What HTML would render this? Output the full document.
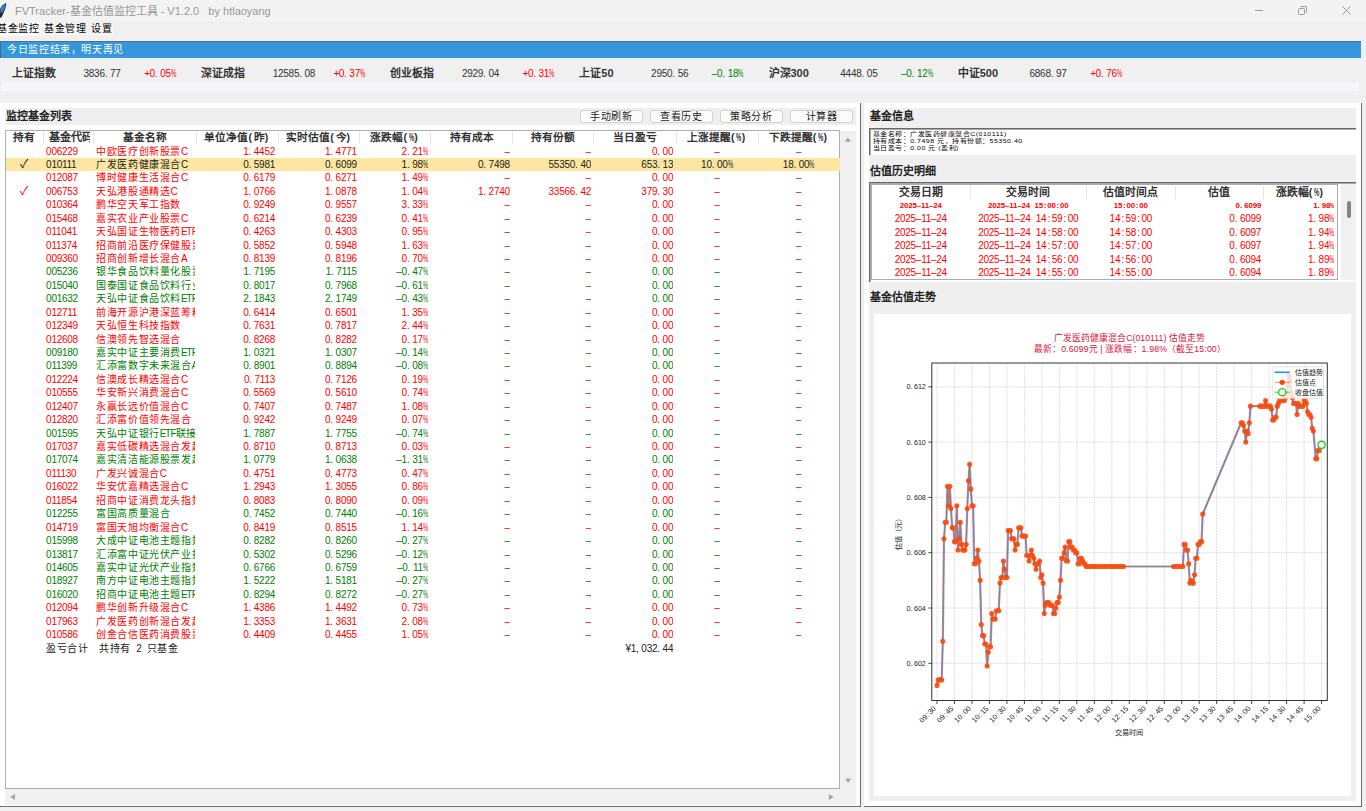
<!DOCTYPE html><html lang="zh-CN"><head><meta charset="utf-8"><style>
*{margin:0;padding:0;box-sizing:border-box}
html,body{width:1366px;height:811px;overflow:hidden;background:#f0f0f0;font-family:"Liberation Sans",sans-serif;position:relative}
.ab{position:absolute}
.tb{position:absolute;left:0;top:0;width:1366px;height:21px;background:#f3f3f3}
.title{position:absolute;left:15px;top:4px;font-size:11px;color:#989898;white-space:pre;line-height:15px}
.menu{position:absolute;top:22px;height:14px;font-size:10px;letter-spacing:0.7px;line-height:14px;color:#000;white-space:nowrap}
.blue{position:absolute;left:0;top:41px;width:1361px;height:17px;background:#3597db;border-top:1px solid #5a6f7e}
.idx{position:absolute;top:67px;line-height:13px;height:13px;white-space:nowrap}
.il{font-size:10.9px;font-weight:bold;color:#333}
.iv{color:#333}
.rd{color:#ff0000}.gr{color:#008000}
.panel{position:absolute;background:#fff;border-right:1px solid #6e6e6e;border-bottom:1px solid #6e6e6e}
.band{position:absolute;background:#efefef}
.st{position:absolute;font-size:11px;font-weight:bold;color:#222;white-space:nowrap;line-height:13px}
.btn{position:absolute;top:109.5px;height:13.5px;width:63px;background:#fbfbfb;border:1px solid #d3d3d3;border-radius:3px;font-size:10px;letter-spacing:0.5px;line-height:11.5px;text-align:center;color:#222}
.c{position:absolute;height:13.43px;line-height:13.43px;white-space:pre;overflow:hidden;font-size:10px;letter-spacing:0.6px}
.hd{position:absolute;top:131px;height:13.6px;line-height:13.6px;font-size:10.7px;font-weight:bold;color:#333;text-align:center;white-space:nowrap;overflow:hidden}
.sep{position:absolute;width:1px;background:#e6e6e6}
.sel{background:#fce6a1}
.row{position:absolute;left:6px;width:833px;height:13.43px}
.ht .c{height:13.45px;line-height:13.45px}
.dk{color:#222}
.ib{font-family:"Liberation Sans",sans-serif;font-size:11px;letter-spacing:0;font-weight:bold}
.a{font-family:"Liberation Sans",sans-serif;font-size:10px;letter-spacing:-0.26px;}
.a .kd{letter-spacing:2.52px}
.a .ko{letter-spacing:1.26px;padding-left:1.26px}
.a .km{letter-spacing:0.98px;padding-left:0.98px}
.a .kc{letter-spacing:2.52px}
.a .kl{letter-spacing:1.97px}
.a .kr{letter-spacing:1.97px}
.a .ks{letter-spacing:2.52px}
.a .kp{letter-spacing:-0.54px}
.a .kC{letter-spacing:-1.92px}
.a .kA{letter-spacing:-1.37px}
.a .kE{letter-spacing:-1.37px}
.a .kT{letter-spacing:-0.81px}
.a .kF{letter-spacing:-0.81px}
.a .pc{display:inline-block;width:5.30px;transform:scaleX(0.596);transform-origin:0 0}
.s{font-family:"Liberation Sans",sans-serif;font-size:7.9px;letter-spacing:-0.13px;font-weight:bold}
.s .kd{letter-spacing:2.06px}
.s .ko{letter-spacing:0.81px;padding-left:0.81px}
.s .km{letter-spacing:0.81px;padding-left:0.81px}
.s .kc{letter-spacing:2.06px}
.s .kl{letter-spacing:1.63px}
.s .kr{letter-spacing:1.63px}
.s .ks{letter-spacing:2.06px}
.s .kp{letter-spacing:-0.35px}
.s .kC{letter-spacing:-1.44px}
.s .kA{letter-spacing:-1.44px}
.s .kE{letter-spacing:-1.01px}
.s .kT{letter-spacing:-0.57px}
.s .kF{letter-spacing:-0.57px}
.s .pc{display:inline-block;width:4.26px;transform:scaleX(0.607);transform-origin:0 0}
.h{font-family:"Liberation Sans",sans-serif;font-size:10.5px;letter-spacing:-0.49px;font-weight:bold}
.h .kd{letter-spacing:2.43px}
.h .ko{letter-spacing:0.93px;padding-left:0.93px}
.h .km{letter-spacing:0.93px;padding-left:0.93px}
.h .kc{letter-spacing:2.43px}
.h .kl{letter-spacing:1.85px}
.h .kr{letter-spacing:1.85px}
.h .ks{letter-spacing:2.43px}
.h .kp{letter-spacing:-0.78px}
.h .kC{letter-spacing:-2.23px}
.h .kA{letter-spacing:-2.23px}
.h .kE{letter-spacing:-1.65px}
.h .kT{letter-spacing:-1.07px}
.h .kF{letter-spacing:-1.07px}
.h .pc{display:inline-block;width:5.35px;transform:scaleX(0.573);transform-origin:0 0}
i{font-style:normal}.s{position:relative;top:-1px}</style></head><body>

<div class="tb"></div>
<svg class="ab" style="left:0;top:0" width="10" height="20" viewBox="0 0 10 20"><path d="M5.9 2.8L6.3 5L5 9.5L2.6 15L1.1 17.9L0 17.2L0 8.8L2.6 5.2Z" fill="#262626"/><path d="M5.4 3.6L5.6 5.4L4.2 9.4L2.4 12.6L0.6 12.8L0.6 9.2L2.9 5.9Z" fill="#3d8fe2"/><path d="M4.8 4.4L3.6 8L1.6 11.5" stroke="#1d5fae" stroke-width="0.7" fill="none"/></svg>
<div class="title">FVTracker-基金估值监控工具 - V1.2.0   by htlaoyang</div>
<div class="ab" style="left:1255px;top:10px;width:8px;height:1px;background:#9a9a9a"></div>
<div class="ab" style="left:1298px;top:7.5px;width:7px;height:7px;border:1px solid #9a9a9a;border-radius:1.5px"></div>
<div class="ab" style="left:1300px;top:6px;width:7px;height:7px;border-top:1px solid #9a9a9a;border-right:1px solid #9a9a9a;border-radius:1.5px"></div>
<svg class="ab" style="left:1341px;top:5px" width="11" height="11"><path d="M1.5 1.5L9.5 9.5M9.5 1.5L1.5 9.5" stroke="#9a9a9a" stroke-width="1"/></svg>
<div class="ab" style="left:0;top:22px;width:42px;height:14px;background:#fafafa"></div>
<div class="ab" style="left:43px;top:22.5px;width:44.5px;height:12.5px;background:#f5f5f5"></div>
<div class="ab" style="left:89px;top:22.5px;width:24.5px;height:12.5px;background:#f5f5f5"></div>
<div class="menu" style="left:-3px">基金监控</div>
<div class="menu" style="left:44px">基金管理</div>
<div class="menu" style="left:91px">设置</div>
<div class="blue"></div><div class="ab" style="left:0;top:42px;width:1px;height:16px;background:#4a6a84"></div>
<div class="ab" style="left:7px;top:43px;font-size:10px;letter-spacing:0.64px;line-height:14px;color:#fff;white-space:nowrap">今日监控结束，明天再见</div>
<div class="idx il" style="left:11.7px">上证指数</div>
<div class="idx iv" style="left:83.5px;top:65px"><span class=a>3836<i class=kd>.</i>77</span></div>
<div class="idx rd" style="left:144.2px;top:65px"><span class=a><i class=kp>+</i>0<i class=kd>.</i>05<i class=pc>%</i></span></div>
<div class="idx il" style="left:200.9px">深证成指</div>
<div class="idx iv" style="left:272.7px;top:65px"><span class=a>12585<i class=kd>.</i>08</span></div>
<div class="idx rd" style="left:333.4px;top:65px"><span class=a><i class=kp>+</i>0<i class=kd>.</i>37<i class=pc>%</i></span></div>
<div class="idx il" style="left:390.1px">创业板指</div>
<div class="idx iv" style="left:461.9px;top:65px"><span class=a>2929<i class=kd>.</i>04</span></div>
<div class="idx rd" style="left:522.6px;top:65px"><span class=a><i class=kp>+</i>0<i class=kd>.</i>31<i class=pc>%</i></span></div>
<div class="idx il" style="left:579.3px">上证<span class=ib>50</span></div>
<div class="idx iv" style="left:651.1px;top:65px"><span class=a>2950<i class=kd>.</i>56</span></div>
<div class="idx gr" style="left:711.8px;top:65px"><span class=a>–0<i class=kd>.</i>18<i class=pc>%</i></span></div>
<div class="idx il" style="left:768.5px">沪深<span class=ib>300</span></div>
<div class="idx iv" style="left:840.3px;top:65px"><span class=a>4448<i class=kd>.</i>05</span></div>
<div class="idx gr" style="left:901.0px;top:65px"><span class=a>–0<i class=kd>.</i>12<i class=pc>%</i></span></div>
<div class="idx il" style="left:957.7px">中证<span class=ib>500</span></div>
<div class="idx iv" style="left:1029.5px;top:65px"><span class=a>6868<i class=kd>.</i>97</span></div>
<div class="idx rd" style="left:1090.2px;top:65px"><span class=a><i class=kp>+</i>0<i class=kd>.</i>76<i class=pc>%</i></span></div>
<div class="ab" style="left:2px;top:82px;width:1357px;height:9px;background:#f7f7f9"></div>
<div class="panel" style="left:0;top:103px;width:861px;height:704px"></div>
<div class="band" style="left:5px;top:107.5px;width:851px;height:17.5px"></div>
<div class="st" style="left:6px;top:110px">监控基金列表</div>
<div class="btn" style="left:579.6px">手动刷新</div>
<div class="btn" style="left:649.6px">查看历史</div>
<div class="btn" style="left:719.7px">策略分析</div>
<div class="btn" style="left:789.8px">计算器</div>
<div class="ab" style="left:5px;top:130px;width:835px;height:659px;background:#fff;border:1px solid #a9adb5"></div>
<div class="ab" style="left:840px;top:130.5px;width:16px;height:674px;background:#f0f0f0"></div>
<div class="ab" style="left:5px;top:789px;width:835px;height:15.5px;background:#f0f0f0"></div>
<svg class="ab" style="left:0;top:0" width="1366" height="811"><path d="M844.8 141.7L851 141.7L847.9 137.3Z" fill="#a3a3a3"/><path d="M845.2 778.5L851 778.5L848.1 783Z" fill="#a3a3a3"/><path d="M829 794L829 800L833.5 797Z" fill="#a3a3a3"/><path d="M15 794L15 800L10.2 797Z" fill="#a3a3a3"/></svg>
<div class="hd" style="left:5.5px;width:37.5px">持有</div>
<div class="hd" style="left:43px;width:46.5px;text-align:left;padding-left:5.5px;font-size:11.2px">基金代码</div>
<div class="sep" style="left:42.5px;top:131px;height:13px"></div>
<div class="hd" style="left:93.5px;width:102.5px">基金名称</div>
<div class="sep" style="left:93.0px;top:131px;height:13px"></div>
<div class="hd" style="left:196.0px;width:82.5px">单位净值<span class=h><i class=kl>(</i></span>昨<span class=h><i class=kr>)</i></span></div>
<div class="sep" style="left:195.5px;top:131px;height:13px"></div>
<div class="hd" style="left:278.5px;width:81.0px">实时估值<span class=h><i class=kl>(</i></span>今<span class=h><i class=kr>)</i></span></div>
<div class="sep" style="left:278.0px;top:131px;height:13px"></div>
<div class="hd" style="left:359.5px;width:71.0px">涨跌幅<span class=h><i class=kl>(</i><i class=pc>%</i><i class=kr>)</i></span></div>
<div class="sep" style="left:359.0px;top:131px;height:13px"></div>
<div class="hd" style="left:430.5px;width:82.0px">持有成本</div>
<div class="sep" style="left:430.0px;top:131px;height:13px"></div>
<div class="hd" style="left:512.5px;width:81.0px">持有份额</div>
<div class="sep" style="left:512.0px;top:131px;height:13px"></div>
<div class="hd" style="left:593.5px;width:82.5px">当日盈亏</div>
<div class="sep" style="left:593.0px;top:131px;height:13px"></div>
<div class="hd" style="left:676.0px;width:82.0px">上涨提醒<span class=h><i class=kl>(</i><i class=pc>%</i><i class=kr>)</i></span></div>
<div class="sep" style="left:675.5px;top:131px;height:13px"></div>
<div class="hd" style="left:758.0px;width:81.5px">下跌提醒<span class=h><i class=kl>(</i><i class=pc>%</i><i class=kr>)</i></span></div>
<div class="sep" style="left:757.5px;top:131px;height:13px"></div>
<div class="c rd" style="top:144.60px;left:5.50px;width:37.50px;text-align:center"></div>
<div class="c rd" style="top:144.60px;left:43.00px;width:50.50px;padding-left:3.1px"><span class=a>006229</span></div>
<div class="c rd" style="top:144.60px;left:93.50px;width:101.50px;padding-left:2.7px">中欧医疗创新股票<span class=a><i class=kC>C</i></span></div>
<div class="c rd" style="top:144.60px;left:196.00px;width:79.00px;text-align:right;padding-right:0.0px"><span class=a>1<i class=kd>.</i>4452</span></div>
<div class="c rd" style="top:144.60px;left:278.50px;width:78.30px;text-align:right;padding-right:0.0px"><span class=a>1<i class=kd>.</i>4771</span></div>
<div class="c rd" style="top:144.60px;left:359.50px;width:68.60px;text-align:right;padding-right:0.0px"><span class=a>2<i class=kd>.</i>21<i class=pc>%</i></span></div>
<div class="c rd" style="top:144.60px;left:430.50px;width:79.30px;text-align:right;padding-right:0.0px"><span class=a>–</span></div>
<div class="c rd" style="top:144.60px;left:512.50px;width:78.50px;text-align:right;padding-right:0.0px"><span class=a>–</span></div>
<div class="c rd" style="top:144.60px;left:593.50px;width:79.70px;text-align:right;padding-right:0.0px"><span class=a>0<i class=kd>.</i>00</span></div>
<div class="c rd" style="top:144.60px;left:676.00px;width:82.00px;text-align:center"><span class=a>–</span></div>
<div class="c rd" style="top:144.60px;left:758.00px;width:81.50px;text-align:center"><span class=a>–</span></div>
<div class="ab sel" style="left:6px;top:158.03px;width:833.5px;height:13.43px"></div>
<div class="c dk" style="top:158.03px;left:5.50px;width:37.50px;text-align:center"><span style="color:#222;font-size:12px">✓</span></div>
<div class="c dk" style="top:158.03px;left:43.00px;width:50.50px;padding-left:3.1px"><span class=a>010111</span></div>
<div class="c dk" style="top:158.03px;left:93.50px;width:101.50px;padding-left:2.7px">广发医药健康混合<span class=a><i class=kC>C</i></span></div>
<div class="c dk" style="top:158.03px;left:196.00px;width:79.00px;text-align:right;padding-right:0.0px"><span class=a>0<i class=kd>.</i>5981</span></div>
<div class="c dk" style="top:158.03px;left:278.50px;width:78.30px;text-align:right;padding-right:0.0px"><span class=a>0<i class=kd>.</i>6099</span></div>
<div class="c dk" style="top:158.03px;left:359.50px;width:68.60px;text-align:right;padding-right:0.0px"><span class=a>1<i class=kd>.</i>98<i class=pc>%</i></span></div>
<div class="c dk" style="top:158.03px;left:430.50px;width:79.30px;text-align:right;padding-right:0.0px"><span class=a>0<i class=kd>.</i>7498</span></div>
<div class="c dk" style="top:158.03px;left:512.50px;width:78.50px;text-align:right;padding-right:0.0px"><span class=a>55350<i class=kd>.</i>40</span></div>
<div class="c dk" style="top:158.03px;left:593.50px;width:79.70px;text-align:right;padding-right:0.0px"><span class=a>653<i class=kd>.</i>13</span></div>
<div class="c dk" style="top:158.03px;left:676.00px;width:82.00px;text-align:center"><span class=a>10<i class=kd>.</i>00<i class=pc>%</i></span></div>
<div class="c dk" style="top:158.03px;left:758.00px;width:81.50px;text-align:center"><span class=a>18<i class=kd>.</i>00<i class=pc>%</i></span></div>
<div class="c rd" style="top:171.46px;left:5.50px;width:37.50px;text-align:center"></div>
<div class="c rd" style="top:171.46px;left:43.00px;width:50.50px;padding-left:3.1px"><span class=a>012087</span></div>
<div class="c rd" style="top:171.46px;left:93.50px;width:101.50px;padding-left:2.7px">博时健康生活混合<span class=a><i class=kC>C</i></span></div>
<div class="c rd" style="top:171.46px;left:196.00px;width:79.00px;text-align:right;padding-right:0.0px"><span class=a>0<i class=kd>.</i>6179</span></div>
<div class="c rd" style="top:171.46px;left:278.50px;width:78.30px;text-align:right;padding-right:0.0px"><span class=a>0<i class=kd>.</i>6271</span></div>
<div class="c rd" style="top:171.46px;left:359.50px;width:68.60px;text-align:right;padding-right:0.0px"><span class=a>1<i class=kd>.</i>49<i class=pc>%</i></span></div>
<div class="c rd" style="top:171.46px;left:430.50px;width:79.30px;text-align:right;padding-right:0.0px"><span class=a>–</span></div>
<div class="c rd" style="top:171.46px;left:512.50px;width:78.50px;text-align:right;padding-right:0.0px"><span class=a>–</span></div>
<div class="c rd" style="top:171.46px;left:593.50px;width:79.70px;text-align:right;padding-right:0.0px"><span class=a>0<i class=kd>.</i>00</span></div>
<div class="c rd" style="top:171.46px;left:676.00px;width:82.00px;text-align:center"><span class=a>–</span></div>
<div class="c rd" style="top:171.46px;left:758.00px;width:81.50px;text-align:center"><span class=a>–</span></div>
<div class="c rd" style="top:184.89px;left:5.50px;width:37.50px;text-align:center"><span style="font-size:12px">✓</span></div>
<div class="c rd" style="top:184.89px;left:43.00px;width:50.50px;padding-left:3.1px"><span class=a>006753</span></div>
<div class="c rd" style="top:184.89px;left:93.50px;width:101.50px;padding-left:2.7px">天弘港股通精选<span class=a><i class=kC>C</i></span></div>
<div class="c rd" style="top:184.89px;left:196.00px;width:79.00px;text-align:right;padding-right:0.0px"><span class=a>1<i class=kd>.</i>0766</span></div>
<div class="c rd" style="top:184.89px;left:278.50px;width:78.30px;text-align:right;padding-right:0.0px"><span class=a>1<i class=kd>.</i>0878</span></div>
<div class="c rd" style="top:184.89px;left:359.50px;width:68.60px;text-align:right;padding-right:0.0px"><span class=a>1<i class=kd>.</i>04<i class=pc>%</i></span></div>
<div class="c rd" style="top:184.89px;left:430.50px;width:79.30px;text-align:right;padding-right:0.0px"><span class=a>1<i class=kd>.</i>2740</span></div>
<div class="c rd" style="top:184.89px;left:512.50px;width:78.50px;text-align:right;padding-right:0.0px"><span class=a>33566<i class=kd>.</i>42</span></div>
<div class="c rd" style="top:184.89px;left:593.50px;width:79.70px;text-align:right;padding-right:0.0px"><span class=a>379<i class=kd>.</i>30</span></div>
<div class="c rd" style="top:184.89px;left:676.00px;width:82.00px;text-align:center"><span class=a>–</span></div>
<div class="c rd" style="top:184.89px;left:758.00px;width:81.50px;text-align:center"><span class=a>–</span></div>
<div class="c rd" style="top:198.32px;left:5.50px;width:37.50px;text-align:center"></div>
<div class="c rd" style="top:198.32px;left:43.00px;width:50.50px;padding-left:3.1px"><span class=a>010364</span></div>
<div class="c rd" style="top:198.32px;left:93.50px;width:101.50px;padding-left:2.7px">鹏华空天军工指数</div>
<div class="c rd" style="top:198.32px;left:196.00px;width:79.00px;text-align:right;padding-right:0.0px"><span class=a>0<i class=kd>.</i>9249</span></div>
<div class="c rd" style="top:198.32px;left:278.50px;width:78.30px;text-align:right;padding-right:0.0px"><span class=a>0<i class=kd>.</i>9557</span></div>
<div class="c rd" style="top:198.32px;left:359.50px;width:68.60px;text-align:right;padding-right:0.0px"><span class=a>3<i class=kd>.</i>33<i class=pc>%</i></span></div>
<div class="c rd" style="top:198.32px;left:430.50px;width:79.30px;text-align:right;padding-right:0.0px"><span class=a>–</span></div>
<div class="c rd" style="top:198.32px;left:512.50px;width:78.50px;text-align:right;padding-right:0.0px"><span class=a>–</span></div>
<div class="c rd" style="top:198.32px;left:593.50px;width:79.70px;text-align:right;padding-right:0.0px"><span class=a>0<i class=kd>.</i>00</span></div>
<div class="c rd" style="top:198.32px;left:676.00px;width:82.00px;text-align:center"><span class=a>–</span></div>
<div class="c rd" style="top:198.32px;left:758.00px;width:81.50px;text-align:center"><span class=a>–</span></div>
<div class="c rd" style="top:211.75px;left:5.50px;width:37.50px;text-align:center"></div>
<div class="c rd" style="top:211.75px;left:43.00px;width:50.50px;padding-left:3.1px"><span class=a>015468</span></div>
<div class="c rd" style="top:211.75px;left:93.50px;width:101.50px;padding-left:2.7px">嘉实农业产业股票<span class=a><i class=kC>C</i></span></div>
<div class="c rd" style="top:211.75px;left:196.00px;width:79.00px;text-align:right;padding-right:0.0px"><span class=a>0<i class=kd>.</i>6214</span></div>
<div class="c rd" style="top:211.75px;left:278.50px;width:78.30px;text-align:right;padding-right:0.0px"><span class=a>0<i class=kd>.</i>6239</span></div>
<div class="c rd" style="top:211.75px;left:359.50px;width:68.60px;text-align:right;padding-right:0.0px"><span class=a>0<i class=kd>.</i>41<i class=pc>%</i></span></div>
<div class="c rd" style="top:211.75px;left:430.50px;width:79.30px;text-align:right;padding-right:0.0px"><span class=a>–</span></div>
<div class="c rd" style="top:211.75px;left:512.50px;width:78.50px;text-align:right;padding-right:0.0px"><span class=a>–</span></div>
<div class="c rd" style="top:211.75px;left:593.50px;width:79.70px;text-align:right;padding-right:0.0px"><span class=a>0<i class=kd>.</i>00</span></div>
<div class="c rd" style="top:211.75px;left:676.00px;width:82.00px;text-align:center"><span class=a>–</span></div>
<div class="c rd" style="top:211.75px;left:758.00px;width:81.50px;text-align:center"><span class=a>–</span></div>
<div class="c rd" style="top:225.18px;left:5.50px;width:37.50px;text-align:center"></div>
<div class="c rd" style="top:225.18px;left:43.00px;width:50.50px;padding-left:3.1px"><span class=a>011041</span></div>
<div class="c rd" style="top:225.18px;left:93.50px;width:101.50px;padding-left:2.7px">天弘国证生物医药<span class=a><i class=kE>E</i><i class=kT>T</i><i class=kF>F</i></span>联接<span class=a><i class=kC>C</i></span></div>
<div class="c rd" style="top:225.18px;left:196.00px;width:79.00px;text-align:right;padding-right:0.0px"><span class=a>0<i class=kd>.</i>4263</span></div>
<div class="c rd" style="top:225.18px;left:278.50px;width:78.30px;text-align:right;padding-right:0.0px"><span class=a>0<i class=kd>.</i>4303</span></div>
<div class="c rd" style="top:225.18px;left:359.50px;width:68.60px;text-align:right;padding-right:0.0px"><span class=a>0<i class=kd>.</i>95<i class=pc>%</i></span></div>
<div class="c rd" style="top:225.18px;left:430.50px;width:79.30px;text-align:right;padding-right:0.0px"><span class=a>–</span></div>
<div class="c rd" style="top:225.18px;left:512.50px;width:78.50px;text-align:right;padding-right:0.0px"><span class=a>–</span></div>
<div class="c rd" style="top:225.18px;left:593.50px;width:79.70px;text-align:right;padding-right:0.0px"><span class=a>0<i class=kd>.</i>00</span></div>
<div class="c rd" style="top:225.18px;left:676.00px;width:82.00px;text-align:center"><span class=a>–</span></div>
<div class="c rd" style="top:225.18px;left:758.00px;width:81.50px;text-align:center"><span class=a>–</span></div>
<div class="c rd" style="top:238.61px;left:5.50px;width:37.50px;text-align:center"></div>
<div class="c rd" style="top:238.61px;left:43.00px;width:50.50px;padding-left:3.1px"><span class=a>011374</span></div>
<div class="c rd" style="top:238.61px;left:93.50px;width:101.50px;padding-left:2.7px">招商前沿医疗保健股票<span class=a><i class=kC>C</i></span></div>
<div class="c rd" style="top:238.61px;left:196.00px;width:79.00px;text-align:right;padding-right:0.0px"><span class=a>0<i class=kd>.</i>5852</span></div>
<div class="c rd" style="top:238.61px;left:278.50px;width:78.30px;text-align:right;padding-right:0.0px"><span class=a>0<i class=kd>.</i>5948</span></div>
<div class="c rd" style="top:238.61px;left:359.50px;width:68.60px;text-align:right;padding-right:0.0px"><span class=a>1<i class=kd>.</i>63<i class=pc>%</i></span></div>
<div class="c rd" style="top:238.61px;left:430.50px;width:79.30px;text-align:right;padding-right:0.0px"><span class=a>–</span></div>
<div class="c rd" style="top:238.61px;left:512.50px;width:78.50px;text-align:right;padding-right:0.0px"><span class=a>–</span></div>
<div class="c rd" style="top:238.61px;left:593.50px;width:79.70px;text-align:right;padding-right:0.0px"><span class=a>0<i class=kd>.</i>00</span></div>
<div class="c rd" style="top:238.61px;left:676.00px;width:82.00px;text-align:center"><span class=a>–</span></div>
<div class="c rd" style="top:238.61px;left:758.00px;width:81.50px;text-align:center"><span class=a>–</span></div>
<div class="c rd" style="top:252.04px;left:5.50px;width:37.50px;text-align:center"></div>
<div class="c rd" style="top:252.04px;left:43.00px;width:50.50px;padding-left:3.1px"><span class=a>009360</span></div>
<div class="c rd" style="top:252.04px;left:93.50px;width:101.50px;padding-left:2.7px">招商创新增长混合<span class=a><i class=kA>A</i></span></div>
<div class="c rd" style="top:252.04px;left:196.00px;width:79.00px;text-align:right;padding-right:0.0px"><span class=a>0<i class=kd>.</i>8139</span></div>
<div class="c rd" style="top:252.04px;left:278.50px;width:78.30px;text-align:right;padding-right:0.0px"><span class=a>0<i class=kd>.</i>8196</span></div>
<div class="c rd" style="top:252.04px;left:359.50px;width:68.60px;text-align:right;padding-right:0.0px"><span class=a>0<i class=kd>.</i>70<i class=pc>%</i></span></div>
<div class="c rd" style="top:252.04px;left:430.50px;width:79.30px;text-align:right;padding-right:0.0px"><span class=a>–</span></div>
<div class="c rd" style="top:252.04px;left:512.50px;width:78.50px;text-align:right;padding-right:0.0px"><span class=a>–</span></div>
<div class="c rd" style="top:252.04px;left:593.50px;width:79.70px;text-align:right;padding-right:0.0px"><span class=a>0<i class=kd>.</i>00</span></div>
<div class="c rd" style="top:252.04px;left:676.00px;width:82.00px;text-align:center"><span class=a>–</span></div>
<div class="c rd" style="top:252.04px;left:758.00px;width:81.50px;text-align:center"><span class=a>–</span></div>
<div class="c gr" style="top:265.47px;left:5.50px;width:37.50px;text-align:center"></div>
<div class="c gr" style="top:265.47px;left:43.00px;width:50.50px;padding-left:3.1px"><span class=a>005236</span></div>
<div class="c gr" style="top:265.47px;left:93.50px;width:101.50px;padding-left:2.7px">银华食品饮料量化股票<span class=a><i class=kC>C</i></span></div>
<div class="c gr" style="top:265.47px;left:196.00px;width:79.00px;text-align:right;padding-right:0.0px"><span class=a>1<i class=kd>.</i>7195</span></div>
<div class="c gr" style="top:265.47px;left:278.50px;width:78.30px;text-align:right;padding-right:0.0px"><span class=a>1<i class=kd>.</i>7115</span></div>
<div class="c gr" style="top:265.47px;left:359.50px;width:68.60px;text-align:right;padding-right:0.0px"><span class=a>–0<i class=kd>.</i>47<i class=pc>%</i></span></div>
<div class="c gr" style="top:265.47px;left:430.50px;width:79.30px;text-align:right;padding-right:0.0px"><span class=a>–</span></div>
<div class="c gr" style="top:265.47px;left:512.50px;width:78.50px;text-align:right;padding-right:0.0px"><span class=a>–</span></div>
<div class="c gr" style="top:265.47px;left:593.50px;width:79.70px;text-align:right;padding-right:0.0px"><span class=a>0<i class=kd>.</i>00</span></div>
<div class="c gr" style="top:265.47px;left:676.00px;width:82.00px;text-align:center"><span class=a>–</span></div>
<div class="c gr" style="top:265.47px;left:758.00px;width:81.50px;text-align:center"><span class=a>–</span></div>
<div class="c gr" style="top:278.90px;left:5.50px;width:37.50px;text-align:center"></div>
<div class="c gr" style="top:278.90px;left:43.00px;width:50.50px;padding-left:3.1px"><span class=a>015040</span></div>
<div class="c gr" style="top:278.90px;left:93.50px;width:101.50px;padding-left:2.7px">国泰国证食品饮料行业指数</div>
<div class="c gr" style="top:278.90px;left:196.00px;width:79.00px;text-align:right;padding-right:0.0px"><span class=a>0<i class=kd>.</i>8017</span></div>
<div class="c gr" style="top:278.90px;left:278.50px;width:78.30px;text-align:right;padding-right:0.0px"><span class=a>0<i class=kd>.</i>7968</span></div>
<div class="c gr" style="top:278.90px;left:359.50px;width:68.60px;text-align:right;padding-right:0.0px"><span class=a>–0<i class=kd>.</i>61<i class=pc>%</i></span></div>
<div class="c gr" style="top:278.90px;left:430.50px;width:79.30px;text-align:right;padding-right:0.0px"><span class=a>–</span></div>
<div class="c gr" style="top:278.90px;left:512.50px;width:78.50px;text-align:right;padding-right:0.0px"><span class=a>–</span></div>
<div class="c gr" style="top:278.90px;left:593.50px;width:79.70px;text-align:right;padding-right:0.0px"><span class=a>0<i class=kd>.</i>00</span></div>
<div class="c gr" style="top:278.90px;left:676.00px;width:82.00px;text-align:center"><span class=a>–</span></div>
<div class="c gr" style="top:278.90px;left:758.00px;width:81.50px;text-align:center"><span class=a>–</span></div>
<div class="c gr" style="top:292.33px;left:5.50px;width:37.50px;text-align:center"></div>
<div class="c gr" style="top:292.33px;left:43.00px;width:50.50px;padding-left:3.1px"><span class=a>001632</span></div>
<div class="c gr" style="top:292.33px;left:93.50px;width:101.50px;padding-left:2.7px">天弘中证食品饮料<span class=a><i class=kE>E</i><i class=kT>T</i><i class=kF>F</i></span>联接<span class=a><i class=kC>C</i></span></div>
<div class="c gr" style="top:292.33px;left:196.00px;width:79.00px;text-align:right;padding-right:0.0px"><span class=a>2<i class=kd>.</i>1843</span></div>
<div class="c gr" style="top:292.33px;left:278.50px;width:78.30px;text-align:right;padding-right:0.0px"><span class=a>2<i class=kd>.</i>1749</span></div>
<div class="c gr" style="top:292.33px;left:359.50px;width:68.60px;text-align:right;padding-right:0.0px"><span class=a>–0<i class=kd>.</i>43<i class=pc>%</i></span></div>
<div class="c gr" style="top:292.33px;left:430.50px;width:79.30px;text-align:right;padding-right:0.0px"><span class=a>–</span></div>
<div class="c gr" style="top:292.33px;left:512.50px;width:78.50px;text-align:right;padding-right:0.0px"><span class=a>–</span></div>
<div class="c gr" style="top:292.33px;left:593.50px;width:79.70px;text-align:right;padding-right:0.0px"><span class=a>0<i class=kd>.</i>00</span></div>
<div class="c gr" style="top:292.33px;left:676.00px;width:82.00px;text-align:center"><span class=a>–</span></div>
<div class="c gr" style="top:292.33px;left:758.00px;width:81.50px;text-align:center"><span class=a>–</span></div>
<div class="c rd" style="top:305.76px;left:5.50px;width:37.50px;text-align:center"></div>
<div class="c rd" style="top:305.76px;left:43.00px;width:50.50px;padding-left:3.1px"><span class=a>012711</span></div>
<div class="c rd" style="top:305.76px;left:93.50px;width:101.50px;padding-left:2.7px">前海开源沪港深蓝筹精选</div>
<div class="c rd" style="top:305.76px;left:196.00px;width:79.00px;text-align:right;padding-right:0.0px"><span class=a>0<i class=kd>.</i>6414</span></div>
<div class="c rd" style="top:305.76px;left:278.50px;width:78.30px;text-align:right;padding-right:0.0px"><span class=a>0<i class=kd>.</i>6501</span></div>
<div class="c rd" style="top:305.76px;left:359.50px;width:68.60px;text-align:right;padding-right:0.0px"><span class=a>1<i class=kd>.</i>35<i class=pc>%</i></span></div>
<div class="c rd" style="top:305.76px;left:430.50px;width:79.30px;text-align:right;padding-right:0.0px"><span class=a>–</span></div>
<div class="c rd" style="top:305.76px;left:512.50px;width:78.50px;text-align:right;padding-right:0.0px"><span class=a>–</span></div>
<div class="c rd" style="top:305.76px;left:593.50px;width:79.70px;text-align:right;padding-right:0.0px"><span class=a>0<i class=kd>.</i>00</span></div>
<div class="c rd" style="top:305.76px;left:676.00px;width:82.00px;text-align:center"><span class=a>–</span></div>
<div class="c rd" style="top:305.76px;left:758.00px;width:81.50px;text-align:center"><span class=a>–</span></div>
<div class="c rd" style="top:319.19px;left:5.50px;width:37.50px;text-align:center"></div>
<div class="c rd" style="top:319.19px;left:43.00px;width:50.50px;padding-left:3.1px"><span class=a>012349</span></div>
<div class="c rd" style="top:319.19px;left:93.50px;width:101.50px;padding-left:2.7px">天弘恒生科技指数</div>
<div class="c rd" style="top:319.19px;left:196.00px;width:79.00px;text-align:right;padding-right:0.0px"><span class=a>0<i class=kd>.</i>7631</span></div>
<div class="c rd" style="top:319.19px;left:278.50px;width:78.30px;text-align:right;padding-right:0.0px"><span class=a>0<i class=kd>.</i>7817</span></div>
<div class="c rd" style="top:319.19px;left:359.50px;width:68.60px;text-align:right;padding-right:0.0px"><span class=a>2<i class=kd>.</i>44<i class=pc>%</i></span></div>
<div class="c rd" style="top:319.19px;left:430.50px;width:79.30px;text-align:right;padding-right:0.0px"><span class=a>–</span></div>
<div class="c rd" style="top:319.19px;left:512.50px;width:78.50px;text-align:right;padding-right:0.0px"><span class=a>–</span></div>
<div class="c rd" style="top:319.19px;left:593.50px;width:79.70px;text-align:right;padding-right:0.0px"><span class=a>0<i class=kd>.</i>00</span></div>
<div class="c rd" style="top:319.19px;left:676.00px;width:82.00px;text-align:center"><span class=a>–</span></div>
<div class="c rd" style="top:319.19px;left:758.00px;width:81.50px;text-align:center"><span class=a>–</span></div>
<div class="c rd" style="top:332.62px;left:5.50px;width:37.50px;text-align:center"></div>
<div class="c rd" style="top:332.62px;left:43.00px;width:50.50px;padding-left:3.1px"><span class=a>012608</span></div>
<div class="c rd" style="top:332.62px;left:93.50px;width:101.50px;padding-left:2.7px">信澳领先智选混合</div>
<div class="c rd" style="top:332.62px;left:196.00px;width:79.00px;text-align:right;padding-right:0.0px"><span class=a>0<i class=kd>.</i>8268</span></div>
<div class="c rd" style="top:332.62px;left:278.50px;width:78.30px;text-align:right;padding-right:0.0px"><span class=a>0<i class=kd>.</i>8282</span></div>
<div class="c rd" style="top:332.62px;left:359.50px;width:68.60px;text-align:right;padding-right:0.0px"><span class=a>0<i class=kd>.</i>17<i class=pc>%</i></span></div>
<div class="c rd" style="top:332.62px;left:430.50px;width:79.30px;text-align:right;padding-right:0.0px"><span class=a>–</span></div>
<div class="c rd" style="top:332.62px;left:512.50px;width:78.50px;text-align:right;padding-right:0.0px"><span class=a>–</span></div>
<div class="c rd" style="top:332.62px;left:593.50px;width:79.70px;text-align:right;padding-right:0.0px"><span class=a>0<i class=kd>.</i>00</span></div>
<div class="c rd" style="top:332.62px;left:676.00px;width:82.00px;text-align:center"><span class=a>–</span></div>
<div class="c rd" style="top:332.62px;left:758.00px;width:81.50px;text-align:center"><span class=a>–</span></div>
<div class="c gr" style="top:346.05px;left:5.50px;width:37.50px;text-align:center"></div>
<div class="c gr" style="top:346.05px;left:43.00px;width:50.50px;padding-left:3.1px"><span class=a>009180</span></div>
<div class="c gr" style="top:346.05px;left:93.50px;width:101.50px;padding-left:2.7px">嘉实中证主要消费<span class=a><i class=kE>E</i><i class=kT>T</i><i class=kF>F</i></span>联接<span class=a><i class=kC>C</i></span></div>
<div class="c gr" style="top:346.05px;left:196.00px;width:79.00px;text-align:right;padding-right:0.0px"><span class=a>1<i class=kd>.</i>0321</span></div>
<div class="c gr" style="top:346.05px;left:278.50px;width:78.30px;text-align:right;padding-right:0.0px"><span class=a>1<i class=kd>.</i>0307</span></div>
<div class="c gr" style="top:346.05px;left:359.50px;width:68.60px;text-align:right;padding-right:0.0px"><span class=a>–0<i class=kd>.</i>14<i class=pc>%</i></span></div>
<div class="c gr" style="top:346.05px;left:430.50px;width:79.30px;text-align:right;padding-right:0.0px"><span class=a>–</span></div>
<div class="c gr" style="top:346.05px;left:512.50px;width:78.50px;text-align:right;padding-right:0.0px"><span class=a>–</span></div>
<div class="c gr" style="top:346.05px;left:593.50px;width:79.70px;text-align:right;padding-right:0.0px"><span class=a>0<i class=kd>.</i>00</span></div>
<div class="c gr" style="top:346.05px;left:676.00px;width:82.00px;text-align:center"><span class=a>–</span></div>
<div class="c gr" style="top:346.05px;left:758.00px;width:81.50px;text-align:center"><span class=a>–</span></div>
<div class="c gr" style="top:359.48px;left:5.50px;width:37.50px;text-align:center"></div>
<div class="c gr" style="top:359.48px;left:43.00px;width:50.50px;padding-left:3.1px"><span class=a>011399</span></div>
<div class="c gr" style="top:359.48px;left:93.50px;width:101.50px;padding-left:2.7px">汇添富数字未来混合<span class=a><i class=kA>A</i></span></div>
<div class="c gr" style="top:359.48px;left:196.00px;width:79.00px;text-align:right;padding-right:0.0px"><span class=a>0<i class=kd>.</i>8901</span></div>
<div class="c gr" style="top:359.48px;left:278.50px;width:78.30px;text-align:right;padding-right:0.0px"><span class=a>0<i class=kd>.</i>8894</span></div>
<div class="c gr" style="top:359.48px;left:359.50px;width:68.60px;text-align:right;padding-right:0.0px"><span class=a>–0<i class=kd>.</i>08<i class=pc>%</i></span></div>
<div class="c gr" style="top:359.48px;left:430.50px;width:79.30px;text-align:right;padding-right:0.0px"><span class=a>–</span></div>
<div class="c gr" style="top:359.48px;left:512.50px;width:78.50px;text-align:right;padding-right:0.0px"><span class=a>–</span></div>
<div class="c gr" style="top:359.48px;left:593.50px;width:79.70px;text-align:right;padding-right:0.0px"><span class=a>0<i class=kd>.</i>00</span></div>
<div class="c gr" style="top:359.48px;left:676.00px;width:82.00px;text-align:center"><span class=a>–</span></div>
<div class="c gr" style="top:359.48px;left:758.00px;width:81.50px;text-align:center"><span class=a>–</span></div>
<div class="c rd" style="top:372.91px;left:5.50px;width:37.50px;text-align:center"></div>
<div class="c rd" style="top:372.91px;left:43.00px;width:50.50px;padding-left:3.1px"><span class=a>012224</span></div>
<div class="c rd" style="top:372.91px;left:93.50px;width:101.50px;padding-left:2.7px">信澳成长精选混合<span class=a><i class=kC>C</i></span></div>
<div class="c rd" style="top:372.91px;left:196.00px;width:79.00px;text-align:right;padding-right:0.0px"><span class=a>0<i class=kd>.</i>7113</span></div>
<div class="c rd" style="top:372.91px;left:278.50px;width:78.30px;text-align:right;padding-right:0.0px"><span class=a>0<i class=kd>.</i>7126</span></div>
<div class="c rd" style="top:372.91px;left:359.50px;width:68.60px;text-align:right;padding-right:0.0px"><span class=a>0<i class=kd>.</i>19<i class=pc>%</i></span></div>
<div class="c rd" style="top:372.91px;left:430.50px;width:79.30px;text-align:right;padding-right:0.0px"><span class=a>–</span></div>
<div class="c rd" style="top:372.91px;left:512.50px;width:78.50px;text-align:right;padding-right:0.0px"><span class=a>–</span></div>
<div class="c rd" style="top:372.91px;left:593.50px;width:79.70px;text-align:right;padding-right:0.0px"><span class=a>0<i class=kd>.</i>00</span></div>
<div class="c rd" style="top:372.91px;left:676.00px;width:82.00px;text-align:center"><span class=a>–</span></div>
<div class="c rd" style="top:372.91px;left:758.00px;width:81.50px;text-align:center"><span class=a>–</span></div>
<div class="c rd" style="top:386.34px;left:5.50px;width:37.50px;text-align:center"></div>
<div class="c rd" style="top:386.34px;left:43.00px;width:50.50px;padding-left:3.1px"><span class=a>010555</span></div>
<div class="c rd" style="top:386.34px;left:93.50px;width:101.50px;padding-left:2.7px">华安新兴消费混合<span class=a><i class=kC>C</i></span></div>
<div class="c rd" style="top:386.34px;left:196.00px;width:79.00px;text-align:right;padding-right:0.0px"><span class=a>0<i class=kd>.</i>5569</span></div>
<div class="c rd" style="top:386.34px;left:278.50px;width:78.30px;text-align:right;padding-right:0.0px"><span class=a>0<i class=kd>.</i>5610</span></div>
<div class="c rd" style="top:386.34px;left:359.50px;width:68.60px;text-align:right;padding-right:0.0px"><span class=a>0<i class=kd>.</i>74<i class=pc>%</i></span></div>
<div class="c rd" style="top:386.34px;left:430.50px;width:79.30px;text-align:right;padding-right:0.0px"><span class=a>–</span></div>
<div class="c rd" style="top:386.34px;left:512.50px;width:78.50px;text-align:right;padding-right:0.0px"><span class=a>–</span></div>
<div class="c rd" style="top:386.34px;left:593.50px;width:79.70px;text-align:right;padding-right:0.0px"><span class=a>0<i class=kd>.</i>00</span></div>
<div class="c rd" style="top:386.34px;left:676.00px;width:82.00px;text-align:center"><span class=a>–</span></div>
<div class="c rd" style="top:386.34px;left:758.00px;width:81.50px;text-align:center"><span class=a>–</span></div>
<div class="c rd" style="top:399.77px;left:5.50px;width:37.50px;text-align:center"></div>
<div class="c rd" style="top:399.77px;left:43.00px;width:50.50px;padding-left:3.1px"><span class=a>012407</span></div>
<div class="c rd" style="top:399.77px;left:93.50px;width:101.50px;padding-left:2.7px">永赢长远价值混合<span class=a><i class=kC>C</i></span></div>
<div class="c rd" style="top:399.77px;left:196.00px;width:79.00px;text-align:right;padding-right:0.0px"><span class=a>0<i class=kd>.</i>7407</span></div>
<div class="c rd" style="top:399.77px;left:278.50px;width:78.30px;text-align:right;padding-right:0.0px"><span class=a>0<i class=kd>.</i>7487</span></div>
<div class="c rd" style="top:399.77px;left:359.50px;width:68.60px;text-align:right;padding-right:0.0px"><span class=a>1<i class=kd>.</i>08<i class=pc>%</i></span></div>
<div class="c rd" style="top:399.77px;left:430.50px;width:79.30px;text-align:right;padding-right:0.0px"><span class=a>–</span></div>
<div class="c rd" style="top:399.77px;left:512.50px;width:78.50px;text-align:right;padding-right:0.0px"><span class=a>–</span></div>
<div class="c rd" style="top:399.77px;left:593.50px;width:79.70px;text-align:right;padding-right:0.0px"><span class=a>0<i class=kd>.</i>00</span></div>
<div class="c rd" style="top:399.77px;left:676.00px;width:82.00px;text-align:center"><span class=a>–</span></div>
<div class="c rd" style="top:399.77px;left:758.00px;width:81.50px;text-align:center"><span class=a>–</span></div>
<div class="c rd" style="top:413.20px;left:5.50px;width:37.50px;text-align:center"></div>
<div class="c rd" style="top:413.20px;left:43.00px;width:50.50px;padding-left:3.1px"><span class=a>012820</span></div>
<div class="c rd" style="top:413.20px;left:93.50px;width:101.50px;padding-left:2.7px">汇添富价值领先混合</div>
<div class="c rd" style="top:413.20px;left:196.00px;width:79.00px;text-align:right;padding-right:0.0px"><span class=a>0<i class=kd>.</i>9242</span></div>
<div class="c rd" style="top:413.20px;left:278.50px;width:78.30px;text-align:right;padding-right:0.0px"><span class=a>0<i class=kd>.</i>9249</span></div>
<div class="c rd" style="top:413.20px;left:359.50px;width:68.60px;text-align:right;padding-right:0.0px"><span class=a>0<i class=kd>.</i>07<i class=pc>%</i></span></div>
<div class="c rd" style="top:413.20px;left:430.50px;width:79.30px;text-align:right;padding-right:0.0px"><span class=a>–</span></div>
<div class="c rd" style="top:413.20px;left:512.50px;width:78.50px;text-align:right;padding-right:0.0px"><span class=a>–</span></div>
<div class="c rd" style="top:413.20px;left:593.50px;width:79.70px;text-align:right;padding-right:0.0px"><span class=a>0<i class=kd>.</i>00</span></div>
<div class="c rd" style="top:413.20px;left:676.00px;width:82.00px;text-align:center"><span class=a>–</span></div>
<div class="c rd" style="top:413.20px;left:758.00px;width:81.50px;text-align:center"><span class=a>–</span></div>
<div class="c gr" style="top:426.63px;left:5.50px;width:37.50px;text-align:center"></div>
<div class="c gr" style="top:426.63px;left:43.00px;width:50.50px;padding-left:3.1px"><span class=a>001595</span></div>
<div class="c gr" style="top:426.63px;left:93.50px;width:101.50px;padding-left:2.7px">天弘中证银行<span class=a><i class=kE>E</i><i class=kT>T</i><i class=kF>F</i></span>联接<span class=a><i class=kC>C</i></span></div>
<div class="c gr" style="top:426.63px;left:196.00px;width:79.00px;text-align:right;padding-right:0.0px"><span class=a>1<i class=kd>.</i>7887</span></div>
<div class="c gr" style="top:426.63px;left:278.50px;width:78.30px;text-align:right;padding-right:0.0px"><span class=a>1<i class=kd>.</i>7755</span></div>
<div class="c gr" style="top:426.63px;left:359.50px;width:68.60px;text-align:right;padding-right:0.0px"><span class=a>–0<i class=kd>.</i>74<i class=pc>%</i></span></div>
<div class="c gr" style="top:426.63px;left:430.50px;width:79.30px;text-align:right;padding-right:0.0px"><span class=a>–</span></div>
<div class="c gr" style="top:426.63px;left:512.50px;width:78.50px;text-align:right;padding-right:0.0px"><span class=a>–</span></div>
<div class="c gr" style="top:426.63px;left:593.50px;width:79.70px;text-align:right;padding-right:0.0px"><span class=a>0<i class=kd>.</i>00</span></div>
<div class="c gr" style="top:426.63px;left:676.00px;width:82.00px;text-align:center"><span class=a>–</span></div>
<div class="c gr" style="top:426.63px;left:758.00px;width:81.50px;text-align:center"><span class=a>–</span></div>
<div class="c rd" style="top:440.06px;left:5.50px;width:37.50px;text-align:center"></div>
<div class="c rd" style="top:440.06px;left:43.00px;width:50.50px;padding-left:3.1px"><span class=a>017037</span></div>
<div class="c rd" style="top:440.06px;left:93.50px;width:101.50px;padding-left:2.7px">嘉实低碳精选混合发起<span class=a><i class=kC>C</i></span></div>
<div class="c rd" style="top:440.06px;left:196.00px;width:79.00px;text-align:right;padding-right:0.0px"><span class=a>0<i class=kd>.</i>8710</span></div>
<div class="c rd" style="top:440.06px;left:278.50px;width:78.30px;text-align:right;padding-right:0.0px"><span class=a>0<i class=kd>.</i>8713</span></div>
<div class="c rd" style="top:440.06px;left:359.50px;width:68.60px;text-align:right;padding-right:0.0px"><span class=a>0<i class=kd>.</i>03<i class=pc>%</i></span></div>
<div class="c rd" style="top:440.06px;left:430.50px;width:79.30px;text-align:right;padding-right:0.0px"><span class=a>–</span></div>
<div class="c rd" style="top:440.06px;left:512.50px;width:78.50px;text-align:right;padding-right:0.0px"><span class=a>–</span></div>
<div class="c rd" style="top:440.06px;left:593.50px;width:79.70px;text-align:right;padding-right:0.0px"><span class=a>0<i class=kd>.</i>00</span></div>
<div class="c rd" style="top:440.06px;left:676.00px;width:82.00px;text-align:center"><span class=a>–</span></div>
<div class="c rd" style="top:440.06px;left:758.00px;width:81.50px;text-align:center"><span class=a>–</span></div>
<div class="c gr" style="top:453.49px;left:5.50px;width:37.50px;text-align:center"></div>
<div class="c gr" style="top:453.49px;left:43.00px;width:50.50px;padding-left:3.1px"><span class=a>017074</span></div>
<div class="c gr" style="top:453.49px;left:93.50px;width:101.50px;padding-left:2.7px">嘉实清洁能源股票发起<span class=a><i class=kC>C</i></span></div>
<div class="c gr" style="top:453.49px;left:196.00px;width:79.00px;text-align:right;padding-right:0.0px"><span class=a>1<i class=kd>.</i>0779</span></div>
<div class="c gr" style="top:453.49px;left:278.50px;width:78.30px;text-align:right;padding-right:0.0px"><span class=a>1<i class=kd>.</i>0638</span></div>
<div class="c gr" style="top:453.49px;left:359.50px;width:68.60px;text-align:right;padding-right:0.0px"><span class=a>–1<i class=kd>.</i>31<i class=pc>%</i></span></div>
<div class="c gr" style="top:453.49px;left:430.50px;width:79.30px;text-align:right;padding-right:0.0px"><span class=a>–</span></div>
<div class="c gr" style="top:453.49px;left:512.50px;width:78.50px;text-align:right;padding-right:0.0px"><span class=a>–</span></div>
<div class="c gr" style="top:453.49px;left:593.50px;width:79.70px;text-align:right;padding-right:0.0px"><span class=a>0<i class=kd>.</i>00</span></div>
<div class="c gr" style="top:453.49px;left:676.00px;width:82.00px;text-align:center"><span class=a>–</span></div>
<div class="c gr" style="top:453.49px;left:758.00px;width:81.50px;text-align:center"><span class=a>–</span></div>
<div class="c rd" style="top:466.92px;left:5.50px;width:37.50px;text-align:center"></div>
<div class="c rd" style="top:466.92px;left:43.00px;width:50.50px;padding-left:3.1px"><span class=a>011130</span></div>
<div class="c rd" style="top:466.92px;left:93.50px;width:101.50px;padding-left:2.7px">广发兴诚混合<span class=a><i class=kC>C</i></span></div>
<div class="c rd" style="top:466.92px;left:196.00px;width:79.00px;text-align:right;padding-right:0.0px"><span class=a>0<i class=kd>.</i>4751</span></div>
<div class="c rd" style="top:466.92px;left:278.50px;width:78.30px;text-align:right;padding-right:0.0px"><span class=a>0<i class=kd>.</i>4773</span></div>
<div class="c rd" style="top:466.92px;left:359.50px;width:68.60px;text-align:right;padding-right:0.0px"><span class=a>0<i class=kd>.</i>47<i class=pc>%</i></span></div>
<div class="c rd" style="top:466.92px;left:430.50px;width:79.30px;text-align:right;padding-right:0.0px"><span class=a>–</span></div>
<div class="c rd" style="top:466.92px;left:512.50px;width:78.50px;text-align:right;padding-right:0.0px"><span class=a>–</span></div>
<div class="c rd" style="top:466.92px;left:593.50px;width:79.70px;text-align:right;padding-right:0.0px"><span class=a>0<i class=kd>.</i>00</span></div>
<div class="c rd" style="top:466.92px;left:676.00px;width:82.00px;text-align:center"><span class=a>–</span></div>
<div class="c rd" style="top:466.92px;left:758.00px;width:81.50px;text-align:center"><span class=a>–</span></div>
<div class="c rd" style="top:480.35px;left:5.50px;width:37.50px;text-align:center"></div>
<div class="c rd" style="top:480.35px;left:43.00px;width:50.50px;padding-left:3.1px"><span class=a>016022</span></div>
<div class="c rd" style="top:480.35px;left:93.50px;width:101.50px;padding-left:2.7px">华安优嘉精选混合<span class=a><i class=kC>C</i></span></div>
<div class="c rd" style="top:480.35px;left:196.00px;width:79.00px;text-align:right;padding-right:0.0px"><span class=a>1<i class=kd>.</i>2943</span></div>
<div class="c rd" style="top:480.35px;left:278.50px;width:78.30px;text-align:right;padding-right:0.0px"><span class=a>1<i class=kd>.</i>3055</span></div>
<div class="c rd" style="top:480.35px;left:359.50px;width:68.60px;text-align:right;padding-right:0.0px"><span class=a>0<i class=kd>.</i>86<i class=pc>%</i></span></div>
<div class="c rd" style="top:480.35px;left:430.50px;width:79.30px;text-align:right;padding-right:0.0px"><span class=a>–</span></div>
<div class="c rd" style="top:480.35px;left:512.50px;width:78.50px;text-align:right;padding-right:0.0px"><span class=a>–</span></div>
<div class="c rd" style="top:480.35px;left:593.50px;width:79.70px;text-align:right;padding-right:0.0px"><span class=a>0<i class=kd>.</i>00</span></div>
<div class="c rd" style="top:480.35px;left:676.00px;width:82.00px;text-align:center"><span class=a>–</span></div>
<div class="c rd" style="top:480.35px;left:758.00px;width:81.50px;text-align:center"><span class=a>–</span></div>
<div class="c rd" style="top:493.78px;left:5.50px;width:37.50px;text-align:center"></div>
<div class="c rd" style="top:493.78px;left:43.00px;width:50.50px;padding-left:3.1px"><span class=a>011854</span></div>
<div class="c rd" style="top:493.78px;left:93.50px;width:101.50px;padding-left:2.7px">招商中证消费龙头指数<span class=a><i class=kC>C</i></span></div>
<div class="c rd" style="top:493.78px;left:196.00px;width:79.00px;text-align:right;padding-right:0.0px"><span class=a>0<i class=kd>.</i>8083</span></div>
<div class="c rd" style="top:493.78px;left:278.50px;width:78.30px;text-align:right;padding-right:0.0px"><span class=a>0<i class=kd>.</i>8090</span></div>
<div class="c rd" style="top:493.78px;left:359.50px;width:68.60px;text-align:right;padding-right:0.0px"><span class=a>0<i class=kd>.</i>09<i class=pc>%</i></span></div>
<div class="c rd" style="top:493.78px;left:430.50px;width:79.30px;text-align:right;padding-right:0.0px"><span class=a>–</span></div>
<div class="c rd" style="top:493.78px;left:512.50px;width:78.50px;text-align:right;padding-right:0.0px"><span class=a>–</span></div>
<div class="c rd" style="top:493.78px;left:593.50px;width:79.70px;text-align:right;padding-right:0.0px"><span class=a>0<i class=kd>.</i>00</span></div>
<div class="c rd" style="top:493.78px;left:676.00px;width:82.00px;text-align:center"><span class=a>–</span></div>
<div class="c rd" style="top:493.78px;left:758.00px;width:81.50px;text-align:center"><span class=a>–</span></div>
<div class="c gr" style="top:507.21px;left:5.50px;width:37.50px;text-align:center"></div>
<div class="c gr" style="top:507.21px;left:43.00px;width:50.50px;padding-left:3.1px"><span class=a>012255</span></div>
<div class="c gr" style="top:507.21px;left:93.50px;width:101.50px;padding-left:2.7px">富国高质量混合</div>
<div class="c gr" style="top:507.21px;left:196.00px;width:79.00px;text-align:right;padding-right:0.0px"><span class=a>0<i class=kd>.</i>7452</span></div>
<div class="c gr" style="top:507.21px;left:278.50px;width:78.30px;text-align:right;padding-right:0.0px"><span class=a>0<i class=kd>.</i>7440</span></div>
<div class="c gr" style="top:507.21px;left:359.50px;width:68.60px;text-align:right;padding-right:0.0px"><span class=a>–0<i class=kd>.</i>16<i class=pc>%</i></span></div>
<div class="c gr" style="top:507.21px;left:430.50px;width:79.30px;text-align:right;padding-right:0.0px"><span class=a>–</span></div>
<div class="c gr" style="top:507.21px;left:512.50px;width:78.50px;text-align:right;padding-right:0.0px"><span class=a>–</span></div>
<div class="c gr" style="top:507.21px;left:593.50px;width:79.70px;text-align:right;padding-right:0.0px"><span class=a>0<i class=kd>.</i>00</span></div>
<div class="c gr" style="top:507.21px;left:676.00px;width:82.00px;text-align:center"><span class=a>–</span></div>
<div class="c gr" style="top:507.21px;left:758.00px;width:81.50px;text-align:center"><span class=a>–</span></div>
<div class="c rd" style="top:520.64px;left:5.50px;width:37.50px;text-align:center"></div>
<div class="c rd" style="top:520.64px;left:43.00px;width:50.50px;padding-left:3.1px"><span class=a>014719</span></div>
<div class="c rd" style="top:520.64px;left:93.50px;width:101.50px;padding-left:2.7px">富国天旭均衡混合<span class=a><i class=kC>C</i></span></div>
<div class="c rd" style="top:520.64px;left:196.00px;width:79.00px;text-align:right;padding-right:0.0px"><span class=a>0<i class=kd>.</i>8419</span></div>
<div class="c rd" style="top:520.64px;left:278.50px;width:78.30px;text-align:right;padding-right:0.0px"><span class=a>0<i class=kd>.</i>8515</span></div>
<div class="c rd" style="top:520.64px;left:359.50px;width:68.60px;text-align:right;padding-right:0.0px"><span class=a>1<i class=kd>.</i>14<i class=pc>%</i></span></div>
<div class="c rd" style="top:520.64px;left:430.50px;width:79.30px;text-align:right;padding-right:0.0px"><span class=a>–</span></div>
<div class="c rd" style="top:520.64px;left:512.50px;width:78.50px;text-align:right;padding-right:0.0px"><span class=a>–</span></div>
<div class="c rd" style="top:520.64px;left:593.50px;width:79.70px;text-align:right;padding-right:0.0px"><span class=a>0<i class=kd>.</i>00</span></div>
<div class="c rd" style="top:520.64px;left:676.00px;width:82.00px;text-align:center"><span class=a>–</span></div>
<div class="c rd" style="top:520.64px;left:758.00px;width:81.50px;text-align:center"><span class=a>–</span></div>
<div class="c gr" style="top:534.07px;left:5.50px;width:37.50px;text-align:center"></div>
<div class="c gr" style="top:534.07px;left:43.00px;width:50.50px;padding-left:3.1px"><span class=a>015998</span></div>
<div class="c gr" style="top:534.07px;left:93.50px;width:101.50px;padding-left:2.7px">大成中证电池主题指数<span class=a><i class=kC>C</i></span></div>
<div class="c gr" style="top:534.07px;left:196.00px;width:79.00px;text-align:right;padding-right:0.0px"><span class=a>0<i class=kd>.</i>8282</span></div>
<div class="c gr" style="top:534.07px;left:278.50px;width:78.30px;text-align:right;padding-right:0.0px"><span class=a>0<i class=kd>.</i>8260</span></div>
<div class="c gr" style="top:534.07px;left:359.50px;width:68.60px;text-align:right;padding-right:0.0px"><span class=a>–0<i class=kd>.</i>27<i class=pc>%</i></span></div>
<div class="c gr" style="top:534.07px;left:430.50px;width:79.30px;text-align:right;padding-right:0.0px"><span class=a>–</span></div>
<div class="c gr" style="top:534.07px;left:512.50px;width:78.50px;text-align:right;padding-right:0.0px"><span class=a>–</span></div>
<div class="c gr" style="top:534.07px;left:593.50px;width:79.70px;text-align:right;padding-right:0.0px"><span class=a>0<i class=kd>.</i>00</span></div>
<div class="c gr" style="top:534.07px;left:676.00px;width:82.00px;text-align:center"><span class=a>–</span></div>
<div class="c gr" style="top:534.07px;left:758.00px;width:81.50px;text-align:center"><span class=a>–</span></div>
<div class="c gr" style="top:547.50px;left:5.50px;width:37.50px;text-align:center"></div>
<div class="c gr" style="top:547.50px;left:43.00px;width:50.50px;padding-left:3.1px"><span class=a>013817</span></div>
<div class="c gr" style="top:547.50px;left:93.50px;width:101.50px;padding-left:2.7px">汇添富中证光伏产业指数<span class=a><i class=kC>C</i></span></div>
<div class="c gr" style="top:547.50px;left:196.00px;width:79.00px;text-align:right;padding-right:0.0px"><span class=a>0<i class=kd>.</i>5302</span></div>
<div class="c gr" style="top:547.50px;left:278.50px;width:78.30px;text-align:right;padding-right:0.0px"><span class=a>0<i class=kd>.</i>5296</span></div>
<div class="c gr" style="top:547.50px;left:359.50px;width:68.60px;text-align:right;padding-right:0.0px"><span class=a>–0<i class=kd>.</i>12<i class=pc>%</i></span></div>
<div class="c gr" style="top:547.50px;left:430.50px;width:79.30px;text-align:right;padding-right:0.0px"><span class=a>–</span></div>
<div class="c gr" style="top:547.50px;left:512.50px;width:78.50px;text-align:right;padding-right:0.0px"><span class=a>–</span></div>
<div class="c gr" style="top:547.50px;left:593.50px;width:79.70px;text-align:right;padding-right:0.0px"><span class=a>0<i class=kd>.</i>00</span></div>
<div class="c gr" style="top:547.50px;left:676.00px;width:82.00px;text-align:center"><span class=a>–</span></div>
<div class="c gr" style="top:547.50px;left:758.00px;width:81.50px;text-align:center"><span class=a>–</span></div>
<div class="c gr" style="top:560.93px;left:5.50px;width:37.50px;text-align:center"></div>
<div class="c gr" style="top:560.93px;left:43.00px;width:50.50px;padding-left:3.1px"><span class=a>014605</span></div>
<div class="c gr" style="top:560.93px;left:93.50px;width:101.50px;padding-left:2.7px">嘉实中证光伏产业指数<span class=a><i class=kC>C</i></span></div>
<div class="c gr" style="top:560.93px;left:196.00px;width:79.00px;text-align:right;padding-right:0.0px"><span class=a>0<i class=kd>.</i>6766</span></div>
<div class="c gr" style="top:560.93px;left:278.50px;width:78.30px;text-align:right;padding-right:0.0px"><span class=a>0<i class=kd>.</i>6759</span></div>
<div class="c gr" style="top:560.93px;left:359.50px;width:68.60px;text-align:right;padding-right:0.0px"><span class=a>–0<i class=kd>.</i>11<i class=pc>%</i></span></div>
<div class="c gr" style="top:560.93px;left:430.50px;width:79.30px;text-align:right;padding-right:0.0px"><span class=a>–</span></div>
<div class="c gr" style="top:560.93px;left:512.50px;width:78.50px;text-align:right;padding-right:0.0px"><span class=a>–</span></div>
<div class="c gr" style="top:560.93px;left:593.50px;width:79.70px;text-align:right;padding-right:0.0px"><span class=a>0<i class=kd>.</i>00</span></div>
<div class="c gr" style="top:560.93px;left:676.00px;width:82.00px;text-align:center"><span class=a>–</span></div>
<div class="c gr" style="top:560.93px;left:758.00px;width:81.50px;text-align:center"><span class=a>–</span></div>
<div class="c gr" style="top:574.36px;left:5.50px;width:37.50px;text-align:center"></div>
<div class="c gr" style="top:574.36px;left:43.00px;width:50.50px;padding-left:3.1px"><span class=a>018927</span></div>
<div class="c gr" style="top:574.36px;left:93.50px;width:101.50px;padding-left:2.7px">南方中证电池主题指数<span class=a><i class=kC>C</i></span></div>
<div class="c gr" style="top:574.36px;left:196.00px;width:79.00px;text-align:right;padding-right:0.0px"><span class=a>1<i class=kd>.</i>5222</span></div>
<div class="c gr" style="top:574.36px;left:278.50px;width:78.30px;text-align:right;padding-right:0.0px"><span class=a>1<i class=kd>.</i>5181</span></div>
<div class="c gr" style="top:574.36px;left:359.50px;width:68.60px;text-align:right;padding-right:0.0px"><span class=a>–0<i class=kd>.</i>27<i class=pc>%</i></span></div>
<div class="c gr" style="top:574.36px;left:430.50px;width:79.30px;text-align:right;padding-right:0.0px"><span class=a>–</span></div>
<div class="c gr" style="top:574.36px;left:512.50px;width:78.50px;text-align:right;padding-right:0.0px"><span class=a>–</span></div>
<div class="c gr" style="top:574.36px;left:593.50px;width:79.70px;text-align:right;padding-right:0.0px"><span class=a>0<i class=kd>.</i>00</span></div>
<div class="c gr" style="top:574.36px;left:676.00px;width:82.00px;text-align:center"><span class=a>–</span></div>
<div class="c gr" style="top:574.36px;left:758.00px;width:81.50px;text-align:center"><span class=a>–</span></div>
<div class="c gr" style="top:587.79px;left:5.50px;width:37.50px;text-align:center"></div>
<div class="c gr" style="top:587.79px;left:43.00px;width:50.50px;padding-left:3.1px"><span class=a>016020</span></div>
<div class="c gr" style="top:587.79px;left:93.50px;width:101.50px;padding-left:2.7px">招商中证电池主题<span class=a><i class=kE>E</i><i class=kT>T</i><i class=kF>F</i></span>联接<span class=a><i class=kC>C</i></span></div>
<div class="c gr" style="top:587.79px;left:196.00px;width:79.00px;text-align:right;padding-right:0.0px"><span class=a>0<i class=kd>.</i>8294</span></div>
<div class="c gr" style="top:587.79px;left:278.50px;width:78.30px;text-align:right;padding-right:0.0px"><span class=a>0<i class=kd>.</i>8272</span></div>
<div class="c gr" style="top:587.79px;left:359.50px;width:68.60px;text-align:right;padding-right:0.0px"><span class=a>–0<i class=kd>.</i>27<i class=pc>%</i></span></div>
<div class="c gr" style="top:587.79px;left:430.50px;width:79.30px;text-align:right;padding-right:0.0px"><span class=a>–</span></div>
<div class="c gr" style="top:587.79px;left:512.50px;width:78.50px;text-align:right;padding-right:0.0px"><span class=a>–</span></div>
<div class="c gr" style="top:587.79px;left:593.50px;width:79.70px;text-align:right;padding-right:0.0px"><span class=a>0<i class=kd>.</i>00</span></div>
<div class="c gr" style="top:587.79px;left:676.00px;width:82.00px;text-align:center"><span class=a>–</span></div>
<div class="c gr" style="top:587.79px;left:758.00px;width:81.50px;text-align:center"><span class=a>–</span></div>
<div class="c rd" style="top:601.22px;left:5.50px;width:37.50px;text-align:center"></div>
<div class="c rd" style="top:601.22px;left:43.00px;width:50.50px;padding-left:3.1px"><span class=a>012094</span></div>
<div class="c rd" style="top:601.22px;left:93.50px;width:101.50px;padding-left:2.7px">鹏华创新升级混合<span class=a><i class=kC>C</i></span></div>
<div class="c rd" style="top:601.22px;left:196.00px;width:79.00px;text-align:right;padding-right:0.0px"><span class=a>1<i class=kd>.</i>4386</span></div>
<div class="c rd" style="top:601.22px;left:278.50px;width:78.30px;text-align:right;padding-right:0.0px"><span class=a>1<i class=kd>.</i>4492</span></div>
<div class="c rd" style="top:601.22px;left:359.50px;width:68.60px;text-align:right;padding-right:0.0px"><span class=a>0<i class=kd>.</i>73<i class=pc>%</i></span></div>
<div class="c rd" style="top:601.22px;left:430.50px;width:79.30px;text-align:right;padding-right:0.0px"><span class=a>–</span></div>
<div class="c rd" style="top:601.22px;left:512.50px;width:78.50px;text-align:right;padding-right:0.0px"><span class=a>–</span></div>
<div class="c rd" style="top:601.22px;left:593.50px;width:79.70px;text-align:right;padding-right:0.0px"><span class=a>0<i class=kd>.</i>00</span></div>
<div class="c rd" style="top:601.22px;left:676.00px;width:82.00px;text-align:center"><span class=a>–</span></div>
<div class="c rd" style="top:601.22px;left:758.00px;width:81.50px;text-align:center"><span class=a>–</span></div>
<div class="c rd" style="top:614.65px;left:5.50px;width:37.50px;text-align:center"></div>
<div class="c rd" style="top:614.65px;left:43.00px;width:50.50px;padding-left:3.1px"><span class=a>017963</span></div>
<div class="c rd" style="top:614.65px;left:93.50px;width:101.50px;padding-left:2.7px">广发医药创新混合发起<span class=a><i class=kC>C</i></span></div>
<div class="c rd" style="top:614.65px;left:196.00px;width:79.00px;text-align:right;padding-right:0.0px"><span class=a>1<i class=kd>.</i>3353</span></div>
<div class="c rd" style="top:614.65px;left:278.50px;width:78.30px;text-align:right;padding-right:0.0px"><span class=a>1<i class=kd>.</i>3631</span></div>
<div class="c rd" style="top:614.65px;left:359.50px;width:68.60px;text-align:right;padding-right:0.0px"><span class=a>2<i class=kd>.</i>08<i class=pc>%</i></span></div>
<div class="c rd" style="top:614.65px;left:430.50px;width:79.30px;text-align:right;padding-right:0.0px"><span class=a>–</span></div>
<div class="c rd" style="top:614.65px;left:512.50px;width:78.50px;text-align:right;padding-right:0.0px"><span class=a>–</span></div>
<div class="c rd" style="top:614.65px;left:593.50px;width:79.70px;text-align:right;padding-right:0.0px"><span class=a>0<i class=kd>.</i>00</span></div>
<div class="c rd" style="top:614.65px;left:676.00px;width:82.00px;text-align:center"><span class=a>–</span></div>
<div class="c rd" style="top:614.65px;left:758.00px;width:81.50px;text-align:center"><span class=a>–</span></div>
<div class="c rd" style="top:628.08px;left:5.50px;width:37.50px;text-align:center"></div>
<div class="c rd" style="top:628.08px;left:43.00px;width:50.50px;padding-left:3.1px"><span class=a>010586</span></div>
<div class="c rd" style="top:628.08px;left:93.50px;width:101.50px;padding-left:2.7px">创金合信医药消费股票<span class=a><i class=kC>C</i></span></div>
<div class="c rd" style="top:628.08px;left:196.00px;width:79.00px;text-align:right;padding-right:0.0px"><span class=a>0<i class=kd>.</i>4409</span></div>
<div class="c rd" style="top:628.08px;left:278.50px;width:78.30px;text-align:right;padding-right:0.0px"><span class=a>0<i class=kd>.</i>4455</span></div>
<div class="c rd" style="top:628.08px;left:359.50px;width:68.60px;text-align:right;padding-right:0.0px"><span class=a>1<i class=kd>.</i>05<i class=pc>%</i></span></div>
<div class="c rd" style="top:628.08px;left:430.50px;width:79.30px;text-align:right;padding-right:0.0px"><span class=a>–</span></div>
<div class="c rd" style="top:628.08px;left:512.50px;width:78.50px;text-align:right;padding-right:0.0px"><span class=a>–</span></div>
<div class="c rd" style="top:628.08px;left:593.50px;width:79.70px;text-align:right;padding-right:0.0px"><span class=a>0<i class=kd>.</i>00</span></div>
<div class="c rd" style="top:628.08px;left:676.00px;width:82.00px;text-align:center"><span class=a>–</span></div>
<div class="c rd" style="top:628.08px;left:758.00px;width:81.50px;text-align:center"><span class=a>–</span></div>
<div class="c dk" style="top:641.51px;left:43.00px;width:153.00px;padding-left:3.1px">盈亏合计<span class=a><i class=ks> </i><i class=ks> </i></span>共持有<span class=a><i class=ks> </i>2<i class=ks> </i></span>只基金</div>
<div class="c dk" style="top:641.51px;left:593.50px;width:79.70px;text-align:right;padding-right:0.0px"><span class=a>¥1<i class=kc>,</i>032<i class=kd>.</i>44</span></div>
<div class="panel" style="left:863.5px;top:103px;width:498px;height:704px"></div>
<div class="band" style="left:868.5px;top:107.5px;width:487.5px;height:693.5px"></div>
<div class="st" style="left:870px;top:110px">基金信息</div>
<div class="ab" style="left:869px;top:128px;width:487px;height:27px;background:#fff;border-top:1px solid #6a6a6a;border-left:1px solid #6a6a6a;box-shadow:inset 1px 1px 0 #a8a8a8"></div>
<div class="ab" style="left:872.7px;top:130.6px;font-size:7px;line-height:8.5px;letter-spacing:0.5px;color:#000;white-space:nowrap;transform:scaleY(0.82);transform-origin:0 0">基金名称：广发医药健康混合C(010111)<br>持有成本：0.7498 元，持有份额：55350.40<br>当日盈亏：0.00 元 (盈利)</div>
<div class="st" style="left:870.4px;top:164.5px">估值历史明细</div>
<div class="ab" style="left:869px;top:182px;width:487px;height:100px;background:#fff;border-top:1px solid #6a6a6a;border-left:1px solid #6a6a6a;box-shadow:inset 1px 1px 0 #a8a8a8"></div>
<div class="ab" style="left:871px;top:184px;width:467px;height:96px;border:1px solid #a9adb5"></div>
<div class="ab" style="left:1341px;top:184px;width:15px;height:96px;background:#f0f0f0"></div>
<div class="ab" style="left:1346.5px;top:201px;width:4px;height:17px;background:#858585;border-radius:2px"></div>
<div class="hd" style="top:185.5px;left:871.4px;width:98.8px;font-size:10.9px">交易日期</div>
<div class="hd" style="top:185.5px;left:970.2px;width:116.1px;font-size:10.9px">交易时间</div>
<div class="sep" style="left:969.7px;top:186px;height:13px"></div>
<div class="hd" style="top:185.5px;left:1086.3px;width:89.0px;font-size:10.9px">估值时间点</div>
<div class="sep" style="left:1085.8px;top:186px;height:13px"></div>
<div class="hd" style="top:185.5px;left:1175.3px;width:87.9px;font-size:10.9px">估值</div>
<div class="sep" style="left:1174.8px;top:186px;height:13px"></div>
<div class="hd" style="top:185.5px;left:1263.2px;width:74.3px;font-size:10.9px">涨跌幅<span class=h><i class=kl>(</i><i class=pc>%</i><i class=kr>)</i></span></div>
<div class="sep" style="left:1262.7px;top:186px;height:13px"></div>
<div class="c rd sm" style="top:199.00px;left:871.40px;width:98.80px;text-align:center"><span class=s>2025–11–24</span></div>
<div class="c rd sm" style="top:199.00px;left:970.20px;width:116.10px;text-align:center"><span class=s>2025–11–24<i class=ks> </i>15<i class=ko>:</i>00<i class=ko>:</i>00</span></div>
<div class="c rd sm" style="top:199.00px;left:1086.30px;width:89.00px;text-align:center"><span class=s>15<i class=ko>:</i>00<i class=ko>:</i>00</span></div>
<div class="c rd sm" style="top:199.00px;left:1175.30px;width:85.90px;text-align:right;padding-right:0.0px"><span class=s>0<i class=kd>.</i>6099</span></div>
<div class="c rd sm" style="top:199.00px;left:1263.20px;width:71.30px;text-align:right;padding-right:0.0px"><span class=s>1<i class=kd>.</i>98<i class=pc>%</i></span></div>
<div class="c rd" style="top:212.45px;left:871.40px;width:98.80px;text-align:center"><span class=a>2025–11–24</span></div>
<div class="c rd" style="top:212.45px;left:970.20px;width:116.10px;text-align:center"><span class=a>2025–11–24<i class=ks> </i>14<i class=ko>:</i>59<i class=ko>:</i>00</span></div>
<div class="c rd" style="top:212.45px;left:1086.30px;width:89.00px;text-align:center"><span class=a>14<i class=ko>:</i>59<i class=ko>:</i>00</span></div>
<div class="c rd" style="top:212.45px;left:1175.30px;width:85.90px;text-align:right;padding-right:0.0px"><span class=a>0<i class=kd>.</i>6099</span></div>
<div class="c rd" style="top:212.45px;left:1263.20px;width:71.30px;text-align:right;padding-right:0.0px"><span class=a>1<i class=kd>.</i>98<i class=pc>%</i></span></div>
<div class="c rd" style="top:225.90px;left:871.40px;width:98.80px;text-align:center"><span class=a>2025–11–24</span></div>
<div class="c rd" style="top:225.90px;left:970.20px;width:116.10px;text-align:center"><span class=a>2025–11–24<i class=ks> </i>14<i class=ko>:</i>58<i class=ko>:</i>00</span></div>
<div class="c rd" style="top:225.90px;left:1086.30px;width:89.00px;text-align:center"><span class=a>14<i class=ko>:</i>58<i class=ko>:</i>00</span></div>
<div class="c rd" style="top:225.90px;left:1175.30px;width:85.90px;text-align:right;padding-right:0.0px"><span class=a>0<i class=kd>.</i>6097</span></div>
<div class="c rd" style="top:225.90px;left:1263.20px;width:71.30px;text-align:right;padding-right:0.0px"><span class=a>1<i class=kd>.</i>94<i class=pc>%</i></span></div>
<div class="c rd" style="top:239.35px;left:871.40px;width:98.80px;text-align:center"><span class=a>2025–11–24</span></div>
<div class="c rd" style="top:239.35px;left:970.20px;width:116.10px;text-align:center"><span class=a>2025–11–24<i class=ks> </i>14<i class=ko>:</i>57<i class=ko>:</i>00</span></div>
<div class="c rd" style="top:239.35px;left:1086.30px;width:89.00px;text-align:center"><span class=a>14<i class=ko>:</i>57<i class=ko>:</i>00</span></div>
<div class="c rd" style="top:239.35px;left:1175.30px;width:85.90px;text-align:right;padding-right:0.0px"><span class=a>0<i class=kd>.</i>6097</span></div>
<div class="c rd" style="top:239.35px;left:1263.20px;width:71.30px;text-align:right;padding-right:0.0px"><span class=a>1<i class=kd>.</i>94<i class=pc>%</i></span></div>
<div class="c rd" style="top:252.80px;left:871.40px;width:98.80px;text-align:center"><span class=a>2025–11–24</span></div>
<div class="c rd" style="top:252.80px;left:970.20px;width:116.10px;text-align:center"><span class=a>2025–11–24<i class=ks> </i>14<i class=ko>:</i>56<i class=ko>:</i>00</span></div>
<div class="c rd" style="top:252.80px;left:1086.30px;width:89.00px;text-align:center"><span class=a>14<i class=ko>:</i>56<i class=ko>:</i>00</span></div>
<div class="c rd" style="top:252.80px;left:1175.30px;width:85.90px;text-align:right;padding-right:0.0px"><span class=a>0<i class=kd>.</i>6094</span></div>
<div class="c rd" style="top:252.80px;left:1263.20px;width:71.30px;text-align:right;padding-right:0.0px"><span class=a>1<i class=kd>.</i>89<i class=pc>%</i></span></div>
<div class="c rd" style="top:266.25px;left:871.40px;width:98.80px;text-align:center"><span class=a>2025–11–24</span></div>
<div class="c rd" style="top:266.25px;left:970.20px;width:116.10px;text-align:center"><span class=a>2025–11–24<i class=ks> </i>14<i class=ko>:</i>55<i class=ko>:</i>00</span></div>
<div class="c rd" style="top:266.25px;left:1086.30px;width:89.00px;text-align:center"><span class=a>14<i class=ko>:</i>55<i class=ko>:</i>00</span></div>
<div class="c rd" style="top:266.25px;left:1175.30px;width:85.90px;text-align:right;padding-right:0.0px"><span class=a>0<i class=kd>.</i>6094</span></div>
<div class="c rd" style="top:266.25px;left:1263.20px;width:71.30px;text-align:right;padding-right:0.0px"><span class=a>1<i class=kd>.</i>89<i class=pc>%</i></span></div>
<div class="st" style="left:870.4px;top:290.5px">基金估值走势</div>
<div class="ab" style="left:874px;top:313.5px;width:477px;height:482.5px;background:#fff"></div>
<svg class="ab" style="left:874px;top:313.5px" width="477" height="482.5" viewBox="874 313.5 477 482.5" font-family="Liberation Sans, sans-serif"><path d="M937.00 363V700M954.48 363V700M971.96 363V700M989.44 363V700M1006.92 363V700M1024.40 363V700M1041.88 363V700M1059.36 363V700M1076.84 363V700M1094.32 363V700M1111.80 363V700M1129.28 363V700M1146.76 363V700M1164.24 363V700M1181.72 363V700M1199.20 363V700M1216.68 363V700M1234.16 363V700M1251.64 363V700M1269.12 363V700M1286.60 363V700M1304.08 363V700M1321.56 363V700M932 662.80H1327M932 607.50H1327M932 552.20H1327M932 496.90H1327M932 441.60H1327M932 386.30H1327" stroke="#d6d6d6" stroke-width="0.8" stroke-dasharray="2.2,1" fill="none"/><path d="M937.00 684.92 L938.17 679.39 L939.33 679.39 L940.50 679.39 L941.66 679.39 L942.83 640.68 L943.99 538.37 L945.16 521.79 L946.32 521.79 L947.49 485.84 L948.65 505.19 L949.82 485.84 L950.98 507.96 L952.15 527.31 L953.31 527.31 L954.48 541.14 L955.65 541.14 L956.81 505.19 L957.98 549.44 L959.14 538.37 L960.31 521.79 L961.47 543.91 L962.64 549.44 L963.80 549.44 L964.97 549.44 L966.13 543.91 L967.30 507.96 L968.46 480.31 L969.63 463.72 L970.79 488.61 L971.96 505.19 L973.13 505.19 L974.29 563.26 L975.46 563.26 L976.62 557.73 L977.79 549.44 L978.95 560.49 L980.12 579.85 L981.28 624.09 L982.45 635.15 L983.61 635.15 L984.78 643.44 L985.94 643.44 L987.11 665.56 L988.27 651.74 L989.44 646.21 L990.61 646.21 L991.77 613.03 L992.94 618.56 L994.10 618.56 L995.27 618.56 L996.43 610.26 L997.60 610.26 L998.76 610.26 L999.93 582.61 L1001.09 577.09 L1002.26 577.09 L1003.42 560.49 L1004.59 568.79 L1005.75 577.09 L1006.92 577.09 L1008.09 530.08 L1009.25 530.08 L1010.42 530.08 L1011.58 538.37 L1012.75 538.37 L1013.91 538.37 L1015.08 549.44 L1016.24 543.91 L1017.41 543.91 L1018.57 527.31 L1019.74 527.31 L1020.90 527.31 L1022.07 535.61 L1023.23 535.61 L1024.40 535.61 L1025.57 535.61 L1026.73 554.96 L1027.90 554.96 L1029.06 560.49 L1030.23 554.96 L1031.39 549.44 L1032.56 554.96 L1033.72 557.73 L1034.89 563.26 L1036.05 568.79 L1037.22 563.26 L1038.38 563.26 L1039.55 560.49 L1040.71 577.09 L1041.88 574.32 L1043.05 582.61 L1044.21 613.03 L1045.38 604.74 L1046.54 601.97 L1047.71 601.97 L1048.87 601.97 L1050.04 604.74 L1051.20 604.74 L1052.37 604.74 L1053.53 613.03 L1054.70 613.03 L1055.86 607.50 L1057.03 601.97 L1058.19 601.97 L1059.36 596.44 L1060.53 579.85 L1061.69 557.73 L1062.86 557.73 L1064.02 552.20 L1065.19 546.67 L1066.35 560.49 L1067.52 560.49 L1068.68 541.14 L1069.85 541.14 L1071.01 546.67 L1072.18 546.67 L1073.34 549.44 L1074.51 549.44 L1075.67 552.20 L1076.84 552.20 L1078.01 563.26 L1079.17 563.26 L1080.34 557.73 L1081.50 557.73 L1082.67 560.49 L1083.83 563.26 L1085.00 563.26 L1086.16 566.02 L1087.33 566.02 L1088.49 566.02 L1089.66 566.02 L1090.82 566.02 L1091.99 566.02 L1093.15 566.02 L1094.32 566.02 L1095.49 566.02 L1096.65 566.02 L1097.82 566.02 L1098.98 566.02 L1100.15 566.02 L1101.31 566.02 L1102.48 566.02 L1103.64 566.02 L1104.81 566.02 L1105.97 566.02 L1107.14 566.02 L1108.30 566.02 L1109.47 566.02 L1110.63 566.02 L1111.80 566.02 L1112.97 566.02 L1114.13 566.02 L1115.30 566.02 L1116.46 566.02 L1117.63 566.02 L1118.79 566.02 L1119.96 566.02 L1121.12 566.02 L1122.29 566.02 L1123.45 566.02 L1173.56 566.02 L1174.73 566.02 L1175.89 566.02 L1177.06 566.02 L1178.22 566.02 L1179.39 566.02 L1180.55 566.02 L1181.72 566.02 L1182.89 566.02 L1184.05 543.91 L1185.22 543.91 L1186.38 549.44 L1187.55 549.44 L1188.71 563.26 L1189.88 582.61 L1191.04 579.85 L1192.21 582.61 L1193.37 582.61 L1194.54 574.32 L1195.70 557.73 L1196.87 557.73 L1198.03 543.91 L1199.20 543.91 L1200.37 541.14 L1201.53 541.14 L1202.70 513.49 L1241.15 422.24 L1242.32 422.24 L1243.48 425.01 L1244.65 430.54 L1245.81 441.60 L1246.98 430.54 L1248.14 433.31 L1249.31 422.24 L1250.47 405.66 L1259.80 405.66 L1260.96 405.66 L1262.13 405.66 L1263.29 405.66 L1264.46 405.66 L1265.62 400.12 L1266.79 405.66 L1267.95 405.66 L1269.12 405.66 L1270.29 405.66 L1271.45 408.42 L1272.62 419.48 L1273.78 419.48 L1274.95 416.71 L1276.11 416.71 L1277.28 405.66 L1278.44 402.89 L1279.61 400.12 L1280.77 400.12 L1281.94 400.12 L1283.10 400.12 L1284.27 400.12 L1285.43 397.36 L1286.60 394.59 L1287.77 386.30 L1288.93 375.24 L1290.10 380.77 L1291.26 391.83 L1292.43 397.36 L1293.59 402.89 L1294.76 402.89 L1295.92 402.89 L1297.09 413.95 L1298.25 402.89 L1299.42 405.66 L1300.58 405.66 L1301.75 405.66 L1302.91 405.66 L1304.08 400.12 L1305.25 400.12 L1306.41 402.89 L1307.58 411.19 L1308.74 413.95 L1309.91 413.95 L1311.07 416.71 L1312.24 427.77 L1313.40 430.54 L1315.73 458.19 L1316.90 458.19 L1318.06 449.89 L1319.23 449.89" stroke="#3b8ee8" stroke-width="2.2" fill="none" stroke-linejoin="round" opacity="0.75"/><path d="M937.00 684.92 L938.17 679.39 L939.33 679.39 L940.50 679.39 L941.66 679.39 L942.83 640.68 L943.99 538.37 L945.16 521.79 L946.32 521.79 L947.49 485.84 L948.65 505.19 L949.82 485.84 L950.98 507.96 L952.15 527.31 L953.31 527.31 L954.48 541.14 L955.65 541.14 L956.81 505.19 L957.98 549.44 L959.14 538.37 L960.31 521.79 L961.47 543.91 L962.64 549.44 L963.80 549.44 L964.97 549.44 L966.13 543.91 L967.30 507.96 L968.46 480.31 L969.63 463.72 L970.79 488.61 L971.96 505.19 L973.13 505.19 L974.29 563.26 L975.46 563.26 L976.62 557.73 L977.79 549.44 L978.95 560.49 L980.12 579.85 L981.28 624.09 L982.45 635.15 L983.61 635.15 L984.78 643.44 L985.94 643.44 L987.11 665.56 L988.27 651.74 L989.44 646.21 L990.61 646.21 L991.77 613.03 L992.94 618.56 L994.10 618.56 L995.27 618.56 L996.43 610.26 L997.60 610.26 L998.76 610.26 L999.93 582.61 L1001.09 577.09 L1002.26 577.09 L1003.42 560.49 L1004.59 568.79 L1005.75 577.09 L1006.92 577.09 L1008.09 530.08 L1009.25 530.08 L1010.42 530.08 L1011.58 538.37 L1012.75 538.37 L1013.91 538.37 L1015.08 549.44 L1016.24 543.91 L1017.41 543.91 L1018.57 527.31 L1019.74 527.31 L1020.90 527.31 L1022.07 535.61 L1023.23 535.61 L1024.40 535.61 L1025.57 535.61 L1026.73 554.96 L1027.90 554.96 L1029.06 560.49 L1030.23 554.96 L1031.39 549.44 L1032.56 554.96 L1033.72 557.73 L1034.89 563.26 L1036.05 568.79 L1037.22 563.26 L1038.38 563.26 L1039.55 560.49 L1040.71 577.09 L1041.88 574.32 L1043.05 582.61 L1044.21 613.03 L1045.38 604.74 L1046.54 601.97 L1047.71 601.97 L1048.87 601.97 L1050.04 604.74 L1051.20 604.74 L1052.37 604.74 L1053.53 613.03 L1054.70 613.03 L1055.86 607.50 L1057.03 601.97 L1058.19 601.97 L1059.36 596.44 L1060.53 579.85 L1061.69 557.73 L1062.86 557.73 L1064.02 552.20 L1065.19 546.67 L1066.35 560.49 L1067.52 560.49 L1068.68 541.14 L1069.85 541.14 L1071.01 546.67 L1072.18 546.67 L1073.34 549.44 L1074.51 549.44 L1075.67 552.20 L1076.84 552.20 L1078.01 563.26 L1079.17 563.26 L1080.34 557.73 L1081.50 557.73 L1082.67 560.49 L1083.83 563.26 L1085.00 563.26 L1086.16 566.02 L1087.33 566.02 L1088.49 566.02 L1089.66 566.02 L1090.82 566.02 L1091.99 566.02 L1093.15 566.02 L1094.32 566.02 L1095.49 566.02 L1096.65 566.02 L1097.82 566.02 L1098.98 566.02 L1100.15 566.02 L1101.31 566.02 L1102.48 566.02 L1103.64 566.02 L1104.81 566.02 L1105.97 566.02 L1107.14 566.02 L1108.30 566.02 L1109.47 566.02 L1110.63 566.02 L1111.80 566.02 L1112.97 566.02 L1114.13 566.02 L1115.30 566.02 L1116.46 566.02 L1117.63 566.02 L1118.79 566.02 L1119.96 566.02 L1121.12 566.02 L1122.29 566.02 L1123.45 566.02 L1173.56 566.02 L1174.73 566.02 L1175.89 566.02 L1177.06 566.02 L1178.22 566.02 L1179.39 566.02 L1180.55 566.02 L1181.72 566.02 L1182.89 566.02 L1184.05 543.91 L1185.22 543.91 L1186.38 549.44 L1187.55 549.44 L1188.71 563.26 L1189.88 582.61 L1191.04 579.85 L1192.21 582.61 L1193.37 582.61 L1194.54 574.32 L1195.70 557.73 L1196.87 557.73 L1198.03 543.91 L1199.20 543.91 L1200.37 541.14 L1201.53 541.14 L1202.70 513.49 L1241.15 422.24 L1242.32 422.24 L1243.48 425.01 L1244.65 430.54 L1245.81 441.60 L1246.98 430.54 L1248.14 433.31 L1249.31 422.24 L1250.47 405.66 L1259.80 405.66 L1260.96 405.66 L1262.13 405.66 L1263.29 405.66 L1264.46 405.66 L1265.62 400.12 L1266.79 405.66 L1267.95 405.66 L1269.12 405.66 L1270.29 405.66 L1271.45 408.42 L1272.62 419.48 L1273.78 419.48 L1274.95 416.71 L1276.11 416.71 L1277.28 405.66 L1278.44 402.89 L1279.61 400.12 L1280.77 400.12 L1281.94 400.12 L1283.10 400.12 L1284.27 400.12 L1285.43 397.36 L1286.60 394.59 L1287.77 386.30 L1288.93 375.24 L1290.10 380.77 L1291.26 391.83 L1292.43 397.36 L1293.59 402.89 L1294.76 402.89 L1295.92 402.89 L1297.09 413.95 L1298.25 402.89 L1299.42 405.66 L1300.58 405.66 L1301.75 405.66 L1302.91 405.66 L1304.08 400.12 L1305.25 400.12 L1306.41 402.89 L1307.58 411.19 L1308.74 413.95 L1309.91 413.95 L1311.07 416.71 L1312.24 427.77 L1313.40 430.54 L1315.73 458.19 L1316.90 458.19 L1318.06 449.89 L1319.23 449.89" stroke="#ff4500" stroke-width="1.1" fill="none" stroke-linejoin="round" opacity="0.6"/><g fill="#ff4500" opacity="0.88"><circle cx="937.00" cy="684.92" r="2.55"/><circle cx="938.17" cy="679.39" r="2.55"/><circle cx="939.33" cy="679.39" r="2.55"/><circle cx="940.50" cy="679.39" r="2.55"/><circle cx="941.66" cy="679.39" r="2.55"/><circle cx="942.83" cy="640.68" r="2.55"/><circle cx="943.99" cy="538.37" r="2.55"/><circle cx="945.16" cy="521.79" r="2.55"/><circle cx="946.32" cy="521.79" r="2.55"/><circle cx="947.49" cy="485.84" r="2.55"/><circle cx="948.65" cy="505.19" r="2.55"/><circle cx="949.82" cy="485.84" r="2.55"/><circle cx="950.98" cy="507.96" r="2.55"/><circle cx="952.15" cy="527.31" r="2.55"/><circle cx="953.31" cy="527.31" r="2.55"/><circle cx="954.48" cy="541.14" r="2.55"/><circle cx="955.65" cy="541.14" r="2.55"/><circle cx="956.81" cy="505.19" r="2.55"/><circle cx="957.98" cy="549.44" r="2.55"/><circle cx="959.14" cy="538.37" r="2.55"/><circle cx="960.31" cy="521.79" r="2.55"/><circle cx="961.47" cy="543.91" r="2.55"/><circle cx="962.64" cy="549.44" r="2.55"/><circle cx="963.80" cy="549.44" r="2.55"/><circle cx="964.97" cy="549.44" r="2.55"/><circle cx="966.13" cy="543.91" r="2.55"/><circle cx="967.30" cy="507.96" r="2.55"/><circle cx="968.46" cy="480.31" r="2.55"/><circle cx="969.63" cy="463.72" r="2.55"/><circle cx="970.79" cy="488.61" r="2.55"/><circle cx="971.96" cy="505.19" r="2.55"/><circle cx="973.13" cy="505.19" r="2.55"/><circle cx="974.29" cy="563.26" r="2.55"/><circle cx="975.46" cy="563.26" r="2.55"/><circle cx="976.62" cy="557.73" r="2.55"/><circle cx="977.79" cy="549.44" r="2.55"/><circle cx="978.95" cy="560.49" r="2.55"/><circle cx="980.12" cy="579.85" r="2.55"/><circle cx="981.28" cy="624.09" r="2.55"/><circle cx="982.45" cy="635.15" r="2.55"/><circle cx="983.61" cy="635.15" r="2.55"/><circle cx="984.78" cy="643.44" r="2.55"/><circle cx="985.94" cy="643.44" r="2.55"/><circle cx="987.11" cy="665.56" r="2.55"/><circle cx="988.27" cy="651.74" r="2.55"/><circle cx="989.44" cy="646.21" r="2.55"/><circle cx="990.61" cy="646.21" r="2.55"/><circle cx="991.77" cy="613.03" r="2.55"/><circle cx="992.94" cy="618.56" r="2.55"/><circle cx="994.10" cy="618.56" r="2.55"/><circle cx="995.27" cy="618.56" r="2.55"/><circle cx="996.43" cy="610.26" r="2.55"/><circle cx="997.60" cy="610.26" r="2.55"/><circle cx="998.76" cy="610.26" r="2.55"/><circle cx="999.93" cy="582.61" r="2.55"/><circle cx="1001.09" cy="577.09" r="2.55"/><circle cx="1002.26" cy="577.09" r="2.55"/><circle cx="1003.42" cy="560.49" r="2.55"/><circle cx="1004.59" cy="568.79" r="2.55"/><circle cx="1005.75" cy="577.09" r="2.55"/><circle cx="1006.92" cy="577.09" r="2.55"/><circle cx="1008.09" cy="530.08" r="2.55"/><circle cx="1009.25" cy="530.08" r="2.55"/><circle cx="1010.42" cy="530.08" r="2.55"/><circle cx="1011.58" cy="538.37" r="2.55"/><circle cx="1012.75" cy="538.37" r="2.55"/><circle cx="1013.91" cy="538.37" r="2.55"/><circle cx="1015.08" cy="549.44" r="2.55"/><circle cx="1016.24" cy="543.91" r="2.55"/><circle cx="1017.41" cy="543.91" r="2.55"/><circle cx="1018.57" cy="527.31" r="2.55"/><circle cx="1019.74" cy="527.31" r="2.55"/><circle cx="1020.90" cy="527.31" r="2.55"/><circle cx="1022.07" cy="535.61" r="2.55"/><circle cx="1023.23" cy="535.61" r="2.55"/><circle cx="1024.40" cy="535.61" r="2.55"/><circle cx="1025.57" cy="535.61" r="2.55"/><circle cx="1026.73" cy="554.96" r="2.55"/><circle cx="1027.90" cy="554.96" r="2.55"/><circle cx="1029.06" cy="560.49" r="2.55"/><circle cx="1030.23" cy="554.96" r="2.55"/><circle cx="1031.39" cy="549.44" r="2.55"/><circle cx="1032.56" cy="554.96" r="2.55"/><circle cx="1033.72" cy="557.73" r="2.55"/><circle cx="1034.89" cy="563.26" r="2.55"/><circle cx="1036.05" cy="568.79" r="2.55"/><circle cx="1037.22" cy="563.26" r="2.55"/><circle cx="1038.38" cy="563.26" r="2.55"/><circle cx="1039.55" cy="560.49" r="2.55"/><circle cx="1040.71" cy="577.09" r="2.55"/><circle cx="1041.88" cy="574.32" r="2.55"/><circle cx="1043.05" cy="582.61" r="2.55"/><circle cx="1044.21" cy="613.03" r="2.55"/><circle cx="1045.38" cy="604.74" r="2.55"/><circle cx="1046.54" cy="601.97" r="2.55"/><circle cx="1047.71" cy="601.97" r="2.55"/><circle cx="1048.87" cy="601.97" r="2.55"/><circle cx="1050.04" cy="604.74" r="2.55"/><circle cx="1051.20" cy="604.74" r="2.55"/><circle cx="1052.37" cy="604.74" r="2.55"/><circle cx="1053.53" cy="613.03" r="2.55"/><circle cx="1054.70" cy="613.03" r="2.55"/><circle cx="1055.86" cy="607.50" r="2.55"/><circle cx="1057.03" cy="601.97" r="2.55"/><circle cx="1058.19" cy="601.97" r="2.55"/><circle cx="1059.36" cy="596.44" r="2.55"/><circle cx="1060.53" cy="579.85" r="2.55"/><circle cx="1061.69" cy="557.73" r="2.55"/><circle cx="1062.86" cy="557.73" r="2.55"/><circle cx="1064.02" cy="552.20" r="2.55"/><circle cx="1065.19" cy="546.67" r="2.55"/><circle cx="1066.35" cy="560.49" r="2.55"/><circle cx="1067.52" cy="560.49" r="2.55"/><circle cx="1068.68" cy="541.14" r="2.55"/><circle cx="1069.85" cy="541.14" r="2.55"/><circle cx="1071.01" cy="546.67" r="2.55"/><circle cx="1072.18" cy="546.67" r="2.55"/><circle cx="1073.34" cy="549.44" r="2.55"/><circle cx="1074.51" cy="549.44" r="2.55"/><circle cx="1075.67" cy="552.20" r="2.55"/><circle cx="1076.84" cy="552.20" r="2.55"/><circle cx="1078.01" cy="563.26" r="2.55"/><circle cx="1079.17" cy="563.26" r="2.55"/><circle cx="1080.34" cy="557.73" r="2.55"/><circle cx="1081.50" cy="557.73" r="2.55"/><circle cx="1082.67" cy="560.49" r="2.55"/><circle cx="1083.83" cy="563.26" r="2.55"/><circle cx="1085.00" cy="563.26" r="2.55"/><circle cx="1086.16" cy="566.02" r="2.55"/><circle cx="1087.33" cy="566.02" r="2.55"/><circle cx="1088.49" cy="566.02" r="2.55"/><circle cx="1089.66" cy="566.02" r="2.55"/><circle cx="1090.82" cy="566.02" r="2.55"/><circle cx="1091.99" cy="566.02" r="2.55"/><circle cx="1093.15" cy="566.02" r="2.55"/><circle cx="1094.32" cy="566.02" r="2.55"/><circle cx="1095.49" cy="566.02" r="2.55"/><circle cx="1096.65" cy="566.02" r="2.55"/><circle cx="1097.82" cy="566.02" r="2.55"/><circle cx="1098.98" cy="566.02" r="2.55"/><circle cx="1100.15" cy="566.02" r="2.55"/><circle cx="1101.31" cy="566.02" r="2.55"/><circle cx="1102.48" cy="566.02" r="2.55"/><circle cx="1103.64" cy="566.02" r="2.55"/><circle cx="1104.81" cy="566.02" r="2.55"/><circle cx="1105.97" cy="566.02" r="2.55"/><circle cx="1107.14" cy="566.02" r="2.55"/><circle cx="1108.30" cy="566.02" r="2.55"/><circle cx="1109.47" cy="566.02" r="2.55"/><circle cx="1110.63" cy="566.02" r="2.55"/><circle cx="1111.80" cy="566.02" r="2.55"/><circle cx="1112.97" cy="566.02" r="2.55"/><circle cx="1114.13" cy="566.02" r="2.55"/><circle cx="1115.30" cy="566.02" r="2.55"/><circle cx="1116.46" cy="566.02" r="2.55"/><circle cx="1117.63" cy="566.02" r="2.55"/><circle cx="1118.79" cy="566.02" r="2.55"/><circle cx="1119.96" cy="566.02" r="2.55"/><circle cx="1121.12" cy="566.02" r="2.55"/><circle cx="1122.29" cy="566.02" r="2.55"/><circle cx="1123.45" cy="566.02" r="2.55"/><circle cx="1173.56" cy="566.02" r="2.55"/><circle cx="1174.73" cy="566.02" r="2.55"/><circle cx="1175.89" cy="566.02" r="2.55"/><circle cx="1177.06" cy="566.02" r="2.55"/><circle cx="1178.22" cy="566.02" r="2.55"/><circle cx="1179.39" cy="566.02" r="2.55"/><circle cx="1180.55" cy="566.02" r="2.55"/><circle cx="1181.72" cy="566.02" r="2.55"/><circle cx="1182.89" cy="566.02" r="2.55"/><circle cx="1184.05" cy="543.91" r="2.55"/><circle cx="1185.22" cy="543.91" r="2.55"/><circle cx="1186.38" cy="549.44" r="2.55"/><circle cx="1187.55" cy="549.44" r="2.55"/><circle cx="1188.71" cy="563.26" r="2.55"/><circle cx="1189.88" cy="582.61" r="2.55"/><circle cx="1191.04" cy="579.85" r="2.55"/><circle cx="1192.21" cy="582.61" r="2.55"/><circle cx="1193.37" cy="582.61" r="2.55"/><circle cx="1194.54" cy="574.32" r="2.55"/><circle cx="1195.70" cy="557.73" r="2.55"/><circle cx="1196.87" cy="557.73" r="2.55"/><circle cx="1198.03" cy="543.91" r="2.55"/><circle cx="1199.20" cy="543.91" r="2.55"/><circle cx="1200.37" cy="541.14" r="2.55"/><circle cx="1201.53" cy="541.14" r="2.55"/><circle cx="1202.70" cy="513.49" r="2.55"/><circle cx="1241.15" cy="422.24" r="2.55"/><circle cx="1242.32" cy="422.24" r="2.55"/><circle cx="1243.48" cy="425.01" r="2.55"/><circle cx="1244.65" cy="430.54" r="2.55"/><circle cx="1245.81" cy="441.60" r="2.55"/><circle cx="1246.98" cy="430.54" r="2.55"/><circle cx="1248.14" cy="433.31" r="2.55"/><circle cx="1249.31" cy="422.24" r="2.55"/><circle cx="1250.47" cy="405.66" r="2.55"/><circle cx="1259.80" cy="405.66" r="2.55"/><circle cx="1260.96" cy="405.66" r="2.55"/><circle cx="1262.13" cy="405.66" r="2.55"/><circle cx="1263.29" cy="405.66" r="2.55"/><circle cx="1264.46" cy="405.66" r="2.55"/><circle cx="1265.62" cy="400.12" r="2.55"/><circle cx="1266.79" cy="405.66" r="2.55"/><circle cx="1267.95" cy="405.66" r="2.55"/><circle cx="1269.12" cy="405.66" r="2.55"/><circle cx="1270.29" cy="405.66" r="2.55"/><circle cx="1271.45" cy="408.42" r="2.55"/><circle cx="1272.62" cy="419.48" r="2.55"/><circle cx="1273.78" cy="419.48" r="2.55"/><circle cx="1274.95" cy="416.71" r="2.55"/><circle cx="1276.11" cy="416.71" r="2.55"/><circle cx="1277.28" cy="405.66" r="2.55"/><circle cx="1278.44" cy="402.89" r="2.55"/><circle cx="1279.61" cy="400.12" r="2.55"/><circle cx="1280.77" cy="400.12" r="2.55"/><circle cx="1281.94" cy="400.12" r="2.55"/><circle cx="1283.10" cy="400.12" r="2.55"/><circle cx="1284.27" cy="400.12" r="2.55"/><circle cx="1285.43" cy="397.36" r="2.55"/><circle cx="1286.60" cy="394.59" r="2.55"/><circle cx="1287.77" cy="386.30" r="2.55"/><circle cx="1288.93" cy="375.24" r="2.55"/><circle cx="1290.10" cy="380.77" r="2.55"/><circle cx="1291.26" cy="391.83" r="2.55"/><circle cx="1292.43" cy="397.36" r="2.55"/><circle cx="1293.59" cy="402.89" r="2.55"/><circle cx="1294.76" cy="402.89" r="2.55"/><circle cx="1295.92" cy="402.89" r="2.55"/><circle cx="1297.09" cy="413.95" r="2.55"/><circle cx="1298.25" cy="402.89" r="2.55"/><circle cx="1299.42" cy="405.66" r="2.55"/><circle cx="1300.58" cy="405.66" r="2.55"/><circle cx="1301.75" cy="405.66" r="2.55"/><circle cx="1302.91" cy="405.66" r="2.55"/><circle cx="1304.08" cy="400.12" r="2.55"/><circle cx="1305.25" cy="400.12" r="2.55"/><circle cx="1306.41" cy="402.89" r="2.55"/><circle cx="1307.58" cy="411.19" r="2.55"/><circle cx="1308.74" cy="413.95" r="2.55"/><circle cx="1309.91" cy="413.95" r="2.55"/><circle cx="1311.07" cy="416.71" r="2.55"/><circle cx="1312.24" cy="427.77" r="2.55"/><circle cx="1313.40" cy="430.54" r="2.55"/><circle cx="1315.73" cy="458.19" r="2.55"/><circle cx="1316.90" cy="458.19" r="2.55"/><circle cx="1318.06" cy="449.89" r="2.55"/><circle cx="1319.23" cy="449.89" r="2.55"/></g><circle cx="1321.56" cy="444.36" r="3.6" fill="#fff" stroke="#22cc22" stroke-width="1.4"/><rect x="931.8" y="362.5" width="395.5" height="337.5" fill="none" stroke="#333" stroke-width="1"/><path d="M937.00 700V703.5M954.48 700V703.5M971.96 700V703.5M989.44 700V703.5M1006.92 700V703.5M1024.40 700V703.5M1041.88 700V703.5M1059.36 700V703.5M1076.84 700V703.5M1094.32 700V703.5M1111.80 700V703.5M1129.28 700V703.5M1146.76 700V703.5M1164.24 700V703.5M1181.72 700V703.5M1199.20 700V703.5M1216.68 700V703.5M1234.16 700V703.5M1251.64 700V703.5M1269.12 700V703.5M1286.60 700V703.5M1304.08 700V703.5M1321.56 700V703.5M928.3 662.80H931.8M928.3 607.50H931.8M928.3 552.20H931.8M928.3 496.90H931.8M928.3 441.60H931.8M928.3 386.30H931.8" stroke="#333" stroke-width="0.9"/><text x="925.8" y="665.40" font-size="7.1" text-anchor="end" fill="#222">0.<tspan dx="1.6">602</tspan></text><text x="925.8" y="610.10" font-size="7.1" text-anchor="end" fill="#222">0.<tspan dx="1.6">604</tspan></text><text x="925.8" y="554.80" font-size="7.1" text-anchor="end" fill="#222">0.<tspan dx="1.6">606</tspan></text><text x="925.8" y="499.50" font-size="7.1" text-anchor="end" fill="#222">0.<tspan dx="1.6">608</tspan></text><text x="925.8" y="444.20" font-size="7.1" text-anchor="end" fill="#222">0.<tspan dx="1.6">610</tspan></text><text x="925.8" y="388.90" font-size="7.1" text-anchor="end" fill="#222">0.<tspan dx="1.6">612</tspan></text><text transform="translate(933.00 705) rotate(-45)" font-size="7.4" text-anchor="end" fill="#222" dy="5">09<tspan dx="0.8">:</tspan><tspan dx="0.8">30</tspan></text><text transform="translate(950.48 705) rotate(-45)" font-size="7.4" text-anchor="end" fill="#222" dy="5">09<tspan dx="0.8">:</tspan><tspan dx="0.8">45</tspan></text><text transform="translate(967.96 705) rotate(-45)" font-size="7.4" text-anchor="end" fill="#222" dy="5">10<tspan dx="0.8">:</tspan><tspan dx="0.8">00</tspan></text><text transform="translate(985.44 705) rotate(-45)" font-size="7.4" text-anchor="end" fill="#222" dy="5">10<tspan dx="0.8">:</tspan><tspan dx="0.8">15</tspan></text><text transform="translate(1002.92 705) rotate(-45)" font-size="7.4" text-anchor="end" fill="#222" dy="5">10<tspan dx="0.8">:</tspan><tspan dx="0.8">30</tspan></text><text transform="translate(1020.40 705) rotate(-45)" font-size="7.4" text-anchor="end" fill="#222" dy="5">10<tspan dx="0.8">:</tspan><tspan dx="0.8">45</tspan></text><text transform="translate(1037.88 705) rotate(-45)" font-size="7.4" text-anchor="end" fill="#222" dy="5">11<tspan dx="0.8">:</tspan><tspan dx="0.8">00</tspan></text><text transform="translate(1055.36 705) rotate(-45)" font-size="7.4" text-anchor="end" fill="#222" dy="5">11<tspan dx="0.8">:</tspan><tspan dx="0.8">15</tspan></text><text transform="translate(1072.84 705) rotate(-45)" font-size="7.4" text-anchor="end" fill="#222" dy="5">11<tspan dx="0.8">:</tspan><tspan dx="0.8">30</tspan></text><text transform="translate(1090.32 705) rotate(-45)" font-size="7.4" text-anchor="end" fill="#222" dy="5">11<tspan dx="0.8">:</tspan><tspan dx="0.8">45</tspan></text><text transform="translate(1107.80 705) rotate(-45)" font-size="7.4" text-anchor="end" fill="#222" dy="5">12<tspan dx="0.8">:</tspan><tspan dx="0.8">00</tspan></text><text transform="translate(1125.28 705) rotate(-45)" font-size="7.4" text-anchor="end" fill="#222" dy="5">12<tspan dx="0.8">:</tspan><tspan dx="0.8">15</tspan></text><text transform="translate(1142.76 705) rotate(-45)" font-size="7.4" text-anchor="end" fill="#222" dy="5">12<tspan dx="0.8">:</tspan><tspan dx="0.8">30</tspan></text><text transform="translate(1160.24 705) rotate(-45)" font-size="7.4" text-anchor="end" fill="#222" dy="5">12<tspan dx="0.8">:</tspan><tspan dx="0.8">45</tspan></text><text transform="translate(1177.72 705) rotate(-45)" font-size="7.4" text-anchor="end" fill="#222" dy="5">13<tspan dx="0.8">:</tspan><tspan dx="0.8">00</tspan></text><text transform="translate(1195.20 705) rotate(-45)" font-size="7.4" text-anchor="end" fill="#222" dy="5">13<tspan dx="0.8">:</tspan><tspan dx="0.8">15</tspan></text><text transform="translate(1212.68 705) rotate(-45)" font-size="7.4" text-anchor="end" fill="#222" dy="5">13<tspan dx="0.8">:</tspan><tspan dx="0.8">30</tspan></text><text transform="translate(1230.16 705) rotate(-45)" font-size="7.4" text-anchor="end" fill="#222" dy="5">13<tspan dx="0.8">:</tspan><tspan dx="0.8">45</tspan></text><text transform="translate(1247.64 705) rotate(-45)" font-size="7.4" text-anchor="end" fill="#222" dy="5">14<tspan dx="0.8">:</tspan><tspan dx="0.8">00</tspan></text><text transform="translate(1265.12 705) rotate(-45)" font-size="7.4" text-anchor="end" fill="#222" dy="5">14<tspan dx="0.8">:</tspan><tspan dx="0.8">15</tspan></text><text transform="translate(1282.60 705) rotate(-45)" font-size="7.4" text-anchor="end" fill="#222" dy="5">14<tspan dx="0.8">:</tspan><tspan dx="0.8">30</tspan></text><text transform="translate(1300.08 705) rotate(-45)" font-size="7.4" text-anchor="end" fill="#222" dy="5">14<tspan dx="0.8">:</tspan><tspan dx="0.8">45</tspan></text><text transform="translate(1317.56 705) rotate(-45)" font-size="7.4" text-anchor="end" fill="#222" dy="5">15<tspan dx="0.8">:</tspan><tspan dx="0.8">00</tspan></text><text x="1129.3" y="734.6" font-size="7.2" text-anchor="middle" fill="#222">交易时间</text><text transform="translate(900.6 531.5) rotate(-90)" font-size="7.1" text-anchor="middle" fill="#222">估值（元）</text><text x="1129.5" y="340.8" font-size="8.8" text-anchor="middle" fill="#dc143c">广发医药健康混合C(010111) 估值走势</text><text x="1129.9" y="351.8" font-size="8.8" letter-spacing="0.1" text-anchor="middle" fill="#dc143c">最新：0.6099元 | 涨跌幅：1.98%（截至15:00）</text><rect x="1272.8" y="366.3" width="50.7" height="31.8" rx="2" fill="#fff" fill-opacity="0.8" stroke="#d0d0d0" stroke-width="0.6"/><path d="M1274.6 371.8H1289.8" stroke="#1e90ff" stroke-width="1.6"/><path d="M1274.6 381.8H1289.8" stroke="#ff4500" stroke-width="0.9" opacity="0.7"/><circle cx="1282.2" cy="381.8" r="2.6" fill="#ff4500"/><path d="M1274.6 391.7H1289.8" stroke="#22cc22" stroke-width="0.9"/><circle cx="1282.2" cy="391.7" r="3.6" fill="#fff" stroke="#22cc22" stroke-width="1.4"/><text x="1294.6" y="374.4" font-size="7" fill="#1a1a1a">估值趋势</text><text x="1294.6" y="384.3" font-size="7" fill="#1a1a1a">估值点</text><text x="1294.6" y="394.3" font-size="7" fill="#1a1a1a">收盘估值</text></svg>
</body></html>
